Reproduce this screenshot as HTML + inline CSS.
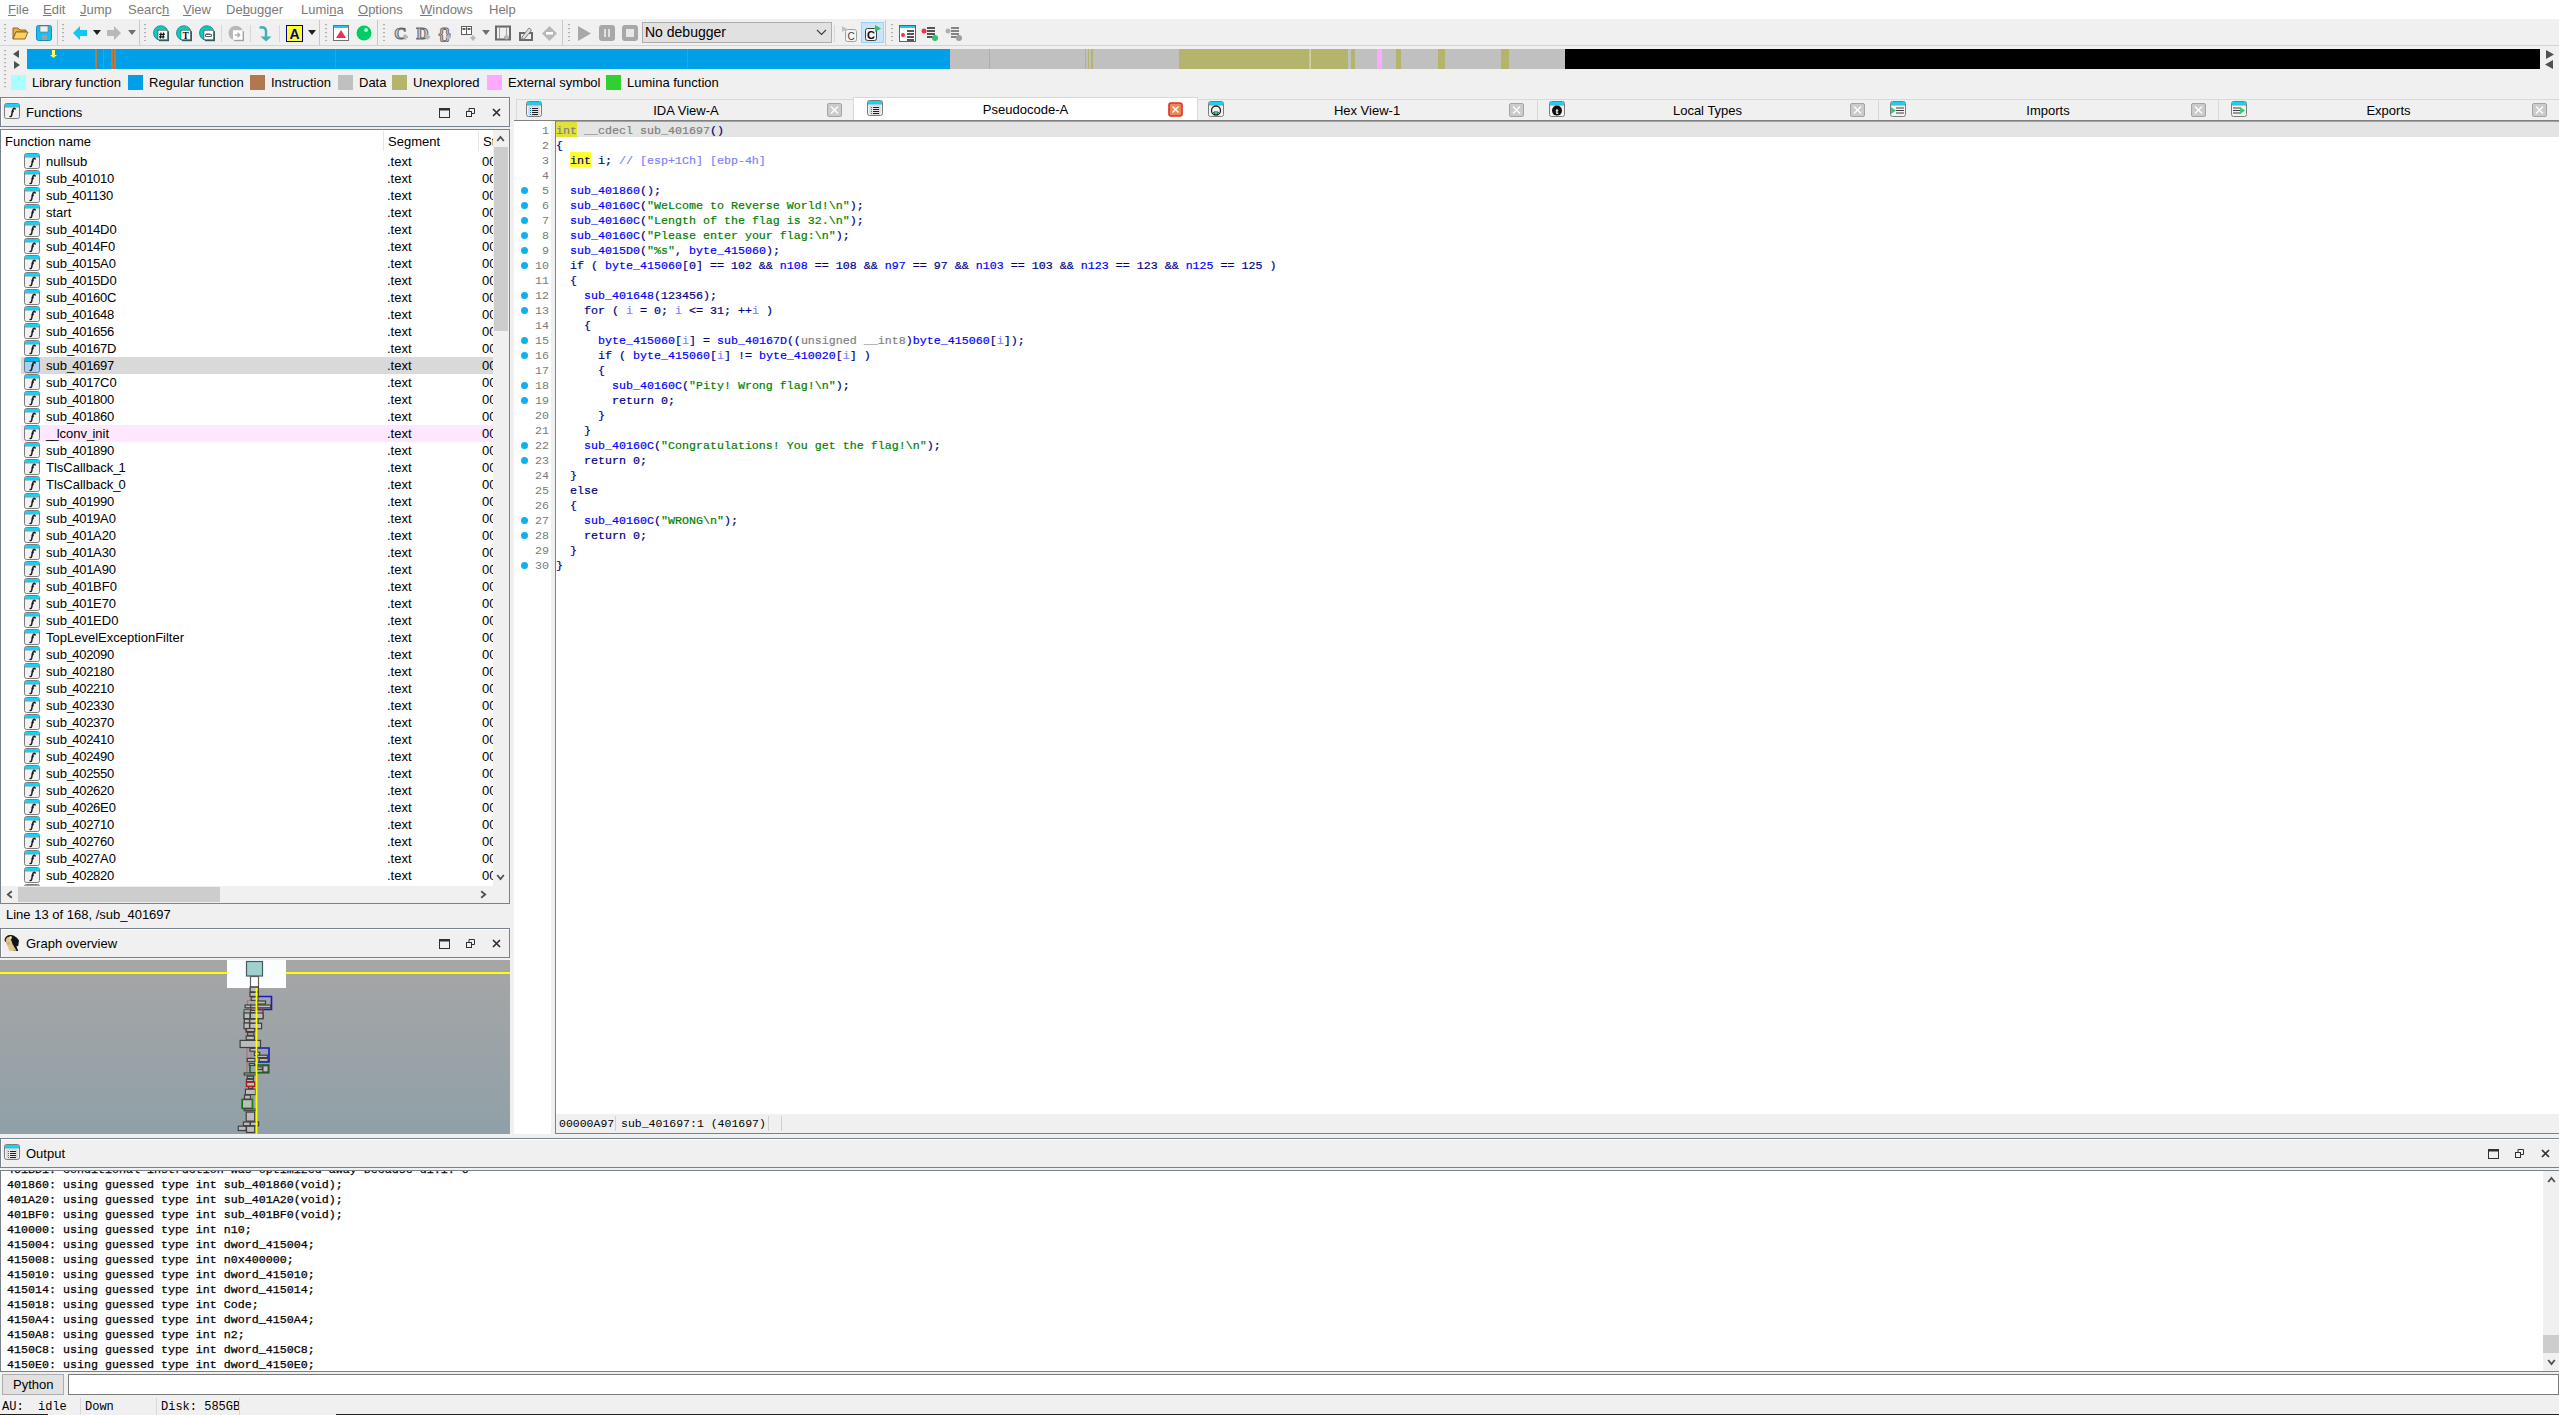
<!DOCTYPE html>
<html><head><meta charset="utf-8"><style>
*{margin:0;padding:0;box-sizing:border-box}
html,body{width:2559px;height:1415px;overflow:hidden;background:#f0f0f0;font-family:"Liberation Sans",sans-serif;font-size:13px;color:#000}
.a{position:absolute}
.t{position:absolute;white-space:pre;line-height:15px}
#menu{left:0;top:0;width:2559px;height:19px;background:#fff}
#menu span{position:absolute;top:2px;color:#7a7a7a;line-height:15px}
#menu u{text-decoration:underline;text-decoration-thickness:1px;text-underline-offset:1px}
.grip{position:absolute;width:2px;height:17px;background:repeating-linear-gradient(#b0b0b0 0 1px,#e0e0e0 1px 2px,transparent 2px 4px)}
.sep{position:absolute;width:1px;background:#c8c8c8}
.seg{position:absolute;top:0;height:20px}
.lg{position:absolute;top:75px;width:15px;height:15px}
.lt{position:absolute;top:75px;line-height:15px}
.dtitle{position:absolute;background:#f0f0f0;border:1px solid #7a828e;box-shadow:inset 1px 1px 0 #fff}
.panel{position:absolute;border:1px solid #7a828e}
.wicon{position:absolute;width:16px;height:16px;border:1px solid #7c7c7c;border-radius:2px;background:#f2f2f2;overflow:hidden}
.wicon:before{content:"";position:absolute;left:0;top:0;right:0;height:3px;background:#00dcff;border-bottom:1px solid #3a90a8}
.fi{position:absolute;font-family:"Liberation Serif",serif;font-style:italic;font-weight:bold;font-size:11px;left:4px;top:2px;line-height:11px;color:#222}
.row{position:absolute;left:21px;width:471px;height:17px}
.row .wicon{left:3px;top:0}
.row .nm{position:absolute;left:25px;top:1px;line-height:15px;white-space:pre}
.row .sg{position:absolute;left:366px;top:1px;line-height:15px}
.row .st{position:absolute;left:461px;top:1px;line-height:15px;width:10px;overflow:hidden;white-space:pre}
.code{position:absolute;left:556px;font-family:"Liberation Mono",monospace;font-size:11.667px;line-height:15px;height:15px;color:#000080;white-space:pre;-webkit-text-stroke-width:0.2px}
.ln{position:absolute;left:500px;width:49px;text-align:right;font-family:"Liberation Mono",monospace;font-size:11.667px;line-height:15px;color:#7a7a7a}
.dot{position:absolute;left:521px;width:7px;height:7px;border-radius:50%;background:#10b0f0}
.g{color:#808080}.b{color:#0000ff}.s{color:#008000}.c{color:#8080ff}.v{color:#8080ff}
.hy{background:#ffff30}.hy1{background:#e2e236}
.tab{position:absolute;height:21px;border:1px solid #d9d9d9;border-bottom:none;background:#f0f0f0}
.tab .tt{position:absolute;top:2px;left:0;width:100%;text-align:center;line-height:15px}
.xb{position:absolute;width:15px;height:14px;border:1px solid #b4b4b4;background:#e6e6e6}
.xb:before,.xb:after{content:"";position:absolute;left:1px;top:5px;width:11px;height:2px;background:#fff;transform:rotate(45deg)}
.xb:after{transform:rotate(-45deg)}
.out{position:absolute;left:7px;font-family:"Liberation Mono",monospace;font-size:11.667px;line-height:15px;color:#000;white-space:pre;-webkit-text-stroke:0.25px #000}
.ttl{position:absolute;line-height:15px;white-space:pre}
.st2{position:absolute;font-family:"Liberation Mono",monospace;font-size:12px;line-height:15px;white-space:pre}
</style></head><body>
<div id="menu" class="a">
<span style="left:8px"><u>F</u>ile</span>
<span style="left:43px"><u>E</u>dit</span>
<span style="left:80px"><u>J</u>ump</span>
<span style="left:128px">Searc<u>h</u></span>
<span style="left:183px"><u>V</u>iew</span>
<span style="left:226px">De<u>b</u>ugger</span>
<span style="left:301px">Lumi<u>n</u>a</span>
<span style="left:358px"><u>O</u>ptions</span>
<span style="left:420px"><u>W</u>indows</span>
<span style="left:489px">Help</span>
</div>
<div class="a" style="left:0;top:19px;width:2559px;height:27px;background:#f0f0f0;border-bottom:1px solid #d4d4d4"></div>
<div class="grip" style="left:4px;top:24px"></div>
<div class="grip" style="left:62px;top:24px"></div>
<div class="grip" style="left:144px;top:24px"></div>
<div class="grip" style="left:325px;top:24px"></div>
<div class="grip" style="left:383px;top:24px"></div>
<div class="grip" style="left:568px;top:24px"></div>
<div class="grip" style="left:891px;top:24px"></div>
<div class="sep" style="left:57px;top:20px;height:25px"></div>
<div class="sep" style="left:139px;top:20px;height:25px"></div>
<div class="sep" style="left:319px;top:20px;height:25px"></div>
<div class="sep" style="left:377px;top:20px;height:25px"></div>
<div class="sep" style="left:562px;top:20px;height:25px"></div>
<div class="sep" style="left:885px;top:20px;height:25px"></div>
<div class="sep" style="left:221px;top:25px;height:17px;background:#d8d8d8"></div>
<div class="sep" style="left:250px;top:25px;height:17px;background:#d8d8d8"></div>
<div class="sep" style="left:279px;top:25px;height:17px;background:#d8d8d8"></div>
<div class="sep" style="left:834px;top:25px;height:17px;background:#d8d8d8"></div>
<svg class="a" style="left:12px;top:26px" width="17" height="14" viewBox="0 0 17 14"><path d="M1 2h5l2 2h6v2H4L1 13z" fill="#e8b030" stroke="#8a6a20"/><path d="M4 6h12l-3 7H1z" fill="#ffd060" stroke="#8a6a20"/></svg>
<svg class="a" style="left:36px;top:25px" width="16" height="16" viewBox="0 0 16 16"><rect x="0.5" y="0.5" width="15" height="15" rx="2" fill="#18c0f0" stroke="#1090c0"/><rect x="4" y="1" width="8" height="6" fill="#f0f0f0" stroke="#707070" stroke-width=".6"/><rect x="6" y="10" width="5" height="5" fill="#a0a0a0"/></svg>
<svg class="a" style="left:73px;top:26px" width="14" height="14" viewBox="0 0 14 14"><path d="M0 7L7 0v4h7v6H7v4z" fill="#10c8f8"/></svg>
<svg class="a" style="left:93px;top:30px" width="8" height="5" viewBox="0 0 8 5"><path d="M0 0h8L4 5z" fill="#202020"/></svg>
<svg class="a" style="left:107px;top:26px" width="14" height="14" viewBox="0 0 14 14"><path d="M14 7L7 0v4H0v6h7v4z" fill="#b8b8b8"/></svg>
<svg class="a" style="left:128px;top:30px" width="8" height="5" viewBox="0 0 8 5"><path d="M0 0h8L4 5z" fill="#707070"/></svg>
<svg class="a" style="left:153px;top:25px" width="17" height="17" viewBox="0 0 17 17"><circle cx="7.8" cy="8" r="7.3" fill="#10c8c0" stroke="#0c8a88" stroke-width=".8"/><rect x="6" y="6.2" width="10" height="10" fill="#2a6060"/><rect x="5" y="5.2" width="9.6" height="9.6" fill="#fff" stroke="#303030" stroke-width=".5"/><path d="M8 7.5l-.6 6M10.6 7.5l-.6 6M6.3 9.3h5.5M6 11.8h5.5" stroke="#101010" stroke-width="1.2"/></svg>
<svg class="a" style="left:176px;top:25px" width="17" height="17" viewBox="0 0 17 17"><circle cx="7.8" cy="8" r="7.3" fill="#10c8c0" stroke="#0c8a88" stroke-width=".8"/><rect x="6" y="6.2" width="10" height="10" fill="#2a6060"/><rect x="5" y="5.2" width="9.6" height="9.6" fill="#fff" stroke="#303030" stroke-width=".5"/><text x="9.6" y="14" font-family="Liberation Serif" font-weight="bold" font-size="9.5" text-anchor="middle" fill="#101010">T</text></svg>
<svg class="a" style="left:199px;top:25px" width="17" height="17" viewBox="0 0 17 17"><circle cx="7.8" cy="8" r="7.3" fill="#10c8c0" stroke="#0c8a88" stroke-width=".8"/><rect x="6" y="6.2" width="10" height="10" fill="#2a6060"/><rect x="5" y="5.2" width="9.6" height="9.6" fill="#fff" stroke="#303030" stroke-width=".5"/><path d="M6.5 9.5h6v2h-6z" fill="none" stroke="#505050" stroke-width=".9"/><path d="M7 8l1 2 1-2 1 2 1-2" stroke="#606060" fill="none" stroke-width=".7"/></svg>
<svg class="a" style="left:228px;top:25px" width="17" height="17" viewBox="0 0 17 17"><circle cx="7.8" cy="8" r="7.3" fill="#b8b8b8"/><rect x="6" y="6.2" width="10" height="10" fill="#a0a0a0"/><rect x="5" y="5.2" width="9.6" height="9.6" fill="#fff"/><path d="M6.8 10h4.5M9.5 7.8l2.2 2.2-2.2 2.2" stroke="#b0b0b0" fill="none" stroke-width="1.4"/></svg>
<svg class="a" style="left:258px;top:25px" width="14" height="17" viewBox="0 0 14 17"><path d="M2.5 2.5q5-1 5.5 3.5v7" stroke="#40b0b0" stroke-width="2.4" fill="none" stroke-linecap="round"/><path d="M2.5 11.5l5.5 5 5.5-5z" fill="#40b0b0"/></svg>
<svg class="a" style="left:286px;top:25px" width="17" height="17" viewBox="0 0 17 17"><rect x="0.5" y="0.5" width="16" height="16" fill="#ffff30" stroke="#000080"/><text x="8.5" y="14" font-family="Liberation Sans" font-weight="bold" font-size="14" text-anchor="middle" fill="#000090">A</text></svg>
<svg class="a" style="left:308px;top:30px" width="8" height="5" viewBox="0 0 8 5"><path d="M0 0h8L4 5z" fill="#202020"/></svg>
<svg class="a" style="left:333px;top:25px" width="16" height="16" viewBox="0 0 16 16"><rect x="0.5" y="0.5" width="15" height="15" fill="#fff" stroke="#707070"/><rect x="1" y="1" width="14" height="2" fill="#20c8f0"/><path d="M3 13L8 5l5 8z" fill="#f03050"/></svg>
<svg class="a" style="left:356px;top:25px" width="16" height="16" viewBox="0 0 16 16"><circle cx="8" cy="8" r="7.5" fill="#00cc66"/><circle cx="10" cy="5" r="2" fill="#b0ffd0"/></svg>
<svg class="a" style="left:394px;top:25px" width="16" height="17" viewBox="0 0 16 17"><text x="6.5" y="14" font-family="Liberation Serif" font-weight="bold" font-size="17" text-anchor="middle" fill="#d8d8d8" stroke="#6a6a6a" stroke-width="1.1">C</text><path d="M11.5 9.5v5M9 12h5" stroke="#b8b8b8" stroke-width="2.2"/></svg>
<svg class="a" style="left:416px;top:25px" width="16" height="17" viewBox="0 0 16 17"><text x="6.5" y="14" font-family="Liberation Serif" font-weight="bold" font-size="17" text-anchor="middle" fill="#d8d8d8" stroke="#6a6a6a" stroke-width="1.1">D</text><path d="M11.5 9.5v5M9 12h5" stroke="#b8b8b8" stroke-width="2.2"/></svg>
<svg class="a" style="left:437px;top:25px" width="17" height="17" viewBox="0 0 17 17"><text x="7.5" y="13.5" font-family="Liberation Sans" font-weight="bold" font-size="15" text-anchor="middle" fill="#d8d8d8" stroke="#6a6a6a" stroke-width="1">{}</text><path d="M11.5 9.5v5M9 12h5" stroke="#b8b8b8" stroke-width="2.2"/></svg>
<svg class="a" style="left:495px;top:25px" width="17" height="17" viewBox="0 0 17 17"><rect x="1" y="1.5" width="14" height="13" fill="none" stroke="#6a6a6a" stroke-width="2"/><rect x="4.5" y="2.5" width="7" height="11" fill="#f0f0f0" stroke="#a0a0a0"/><path d="M11.5 9.5v5M9 12h5" stroke="#b8b8b8" stroke-width="2.2"/></svg>
<svg class="a" style="left:461px;top:25px" width="17" height="17" viewBox="0 0 17 17"><rect x="0.5" y="1.5" width="5" height="8" fill="#fff" stroke="#606060"/><rect x="5.5" y="1.5" width="5" height="8" fill="#fff" stroke="#606060"/><path d="M1.5 4h3M6.5 4h3" stroke="#606060" stroke-width="2"/><path d="M12 10.5v5M9.5 13h5" stroke="#b8b8b8" stroke-width="2.2"/></svg>
<svg class="a" style="left:482px;top:30px" width="8" height="5" viewBox="0 0 8 5"><path d="M0 0h8L4 5z" fill="#707070"/></svg>
<svg class="a" style="left:518px;top:26px" width="16" height="16" viewBox="0 0 16 16"><path d="M1 6h14v9H1z" fill="#6a6a6a"/><path d="M3 8h10v5H3z" fill="#f0f0f0"/><path d="M4 11l7-9 2.5 2-7 9H4z" fill="#e0e0e0" stroke="#808080"/></svg>
<svg class="a" style="left:542px;top:26px" width="15" height="15" viewBox="0 0 15 15"><path d="M7.5 0L15 7.5 7.5 15 0 7.5z" fill="#b8b8b8"/><rect x="4" y="6" width="7" height="2.6" fill="#fff"/></svg>
<svg class="a" style="left:577px;top:26px" width="15" height="15" viewBox="0 0 15 15"><path d="M1 0l13 7.5L1 15z" fill="#a8a8a8"/></svg>
<svg class="a" style="left:599px;top:25px" width="16" height="16" viewBox="0 0 16 16"><rect x="0" y="0" width="16" height="16" rx="3" fill="#a8a8a8"/><rect x="5" y="4" width="2" height="8" fill="#e0e0e0"/><rect x="9" y="4" width="2" height="8" fill="#e0e0e0"/></svg>
<svg class="a" style="left:622px;top:25px" width="16" height="16" viewBox="0 0 16 16"><rect x="0" y="0" width="16" height="16" rx="3" fill="#a8a8a8"/><rect x="4" y="4" width="8" height="8" fill="#e8e8e8"/></svg>
<div class="a" style="left:642px;top:22px;width:190px;height:21px;background:#e1e1e1;border:1px solid #adadad"></div>
<div class="t" style="left:645px;top:25px;font-size:14px">No debugger</div>
<svg class="a" style="left:816px;top:29px" width="11" height="7" viewBox="0 0 11 7"><path d="M1 1l4.5 4.5L10 1" stroke="#404040" fill="none" stroke-width="1.2"/></svg>
<svg class="a" style="left:841px;top:25px" width="17" height="17" viewBox="0 0 17 17"><path d="M1 1l5 3-5 3z" fill="#c0c0c0"/><rect x="4.5" y="4.5" width="11" height="12" rx="2" fill="#f4f4f4" stroke="#a0a0a0"/><text x="10" y="14.5" font-family="Liberation Sans" font-size="10" text-anchor="middle" fill="#404040">C</text></svg>
<div class="a" style="left:861px;top:22px;width:23px;height:21px;background:#cce4f7;border:1px solid #99d1ff"></div>
<svg class="a" style="left:864px;top:24px" width="18" height="18" viewBox="0 0 18 18"><rect x="1.5" y="4.5" width="11" height="12" rx="2" fill="#f4f4f4" stroke="#404040"/><text x="7" y="15" font-family="Liberation Sans" font-weight="bold" font-size="11" text-anchor="middle" fill="#101010">C</text><path d="M11 1l6 3.5-6 3.5z" fill="#30c070"/></svg>
<svg class="a" style="left:899px;top:25px" width="17" height="17" viewBox="0 0 17 17"><rect x="0.5" y="0.5" width="16" height="16" fill="#fff" stroke="#606060"/><rect x="1" y="1" width="15" height="2" fill="#20c8f0"/><circle cx="4" cy="10" r="2" fill="#f03050"/><path d="M8 6h7M8 9h7M8 12h7M8 15h7" stroke="#202020" stroke-width="1.3"/></svg>
<svg class="a" style="left:921px;top:25px" width="18" height="17" viewBox="0 0 18 17"><circle cx="3" cy="6" r="2.5" fill="#f03050"/><path d="M6 3h8M6 6h8M6 9h8M6 12h8" stroke="#202020" stroke-width="1.5"/><circle cx="14" cy="13" r="3" fill="#30c070"/></svg>
<svg class="a" style="left:945px;top:25px" width="18" height="17" viewBox="0 0 18 17"><circle cx="3" cy="6" r="2.5" fill="#b0b0b0"/><path d="M6 3h8M6 6h8M6 9h8M6 12h8" stroke="#606060" stroke-width="1.5"/><circle cx="14" cy="13" r="3" fill="#a0a0a0"/></svg>
<svg class="a" style="left:13px;top:50px" width="7" height="8" viewBox="0 0 7 8"><path d="M6 0v8L0 4z" fill="#505050"/></svg>
<svg class="a" style="left:14px;top:61px" width="7" height="8" viewBox="0 0 7 8"><path d="M0 0v8l6-4z" fill="#505050"/></svg>
<div class="grip" style="left:4px;top:50px;height:40px"></div>
<div class="a" style="left:27px;top:49px;width:2513px;height:20px;background:#c0c0c0">
<div class="seg" style="left:0px;width:923px;background:#00a0e8"></div>
<div class="seg" style="left:68px;width:2px;background:#c07840"></div>
<div class="seg" style="left:76px;width:1px;background:#c07840"></div>
<div class="seg" style="left:84px;width:2px;background:#c07840"></div>
<div class="seg" style="left:87px;width:2px;background:#c07840"></div>
<div class="seg" style="left:308px;width:1px;background:#c07840"></div>
<div class="seg" style="left:660px;width:1px;background:#c07840"></div>
<div class="seg" style="left:962px;width:1px;background:#b4b46c"></div>
<div class="seg" style="left:1058px;width:1px;background:#b4b46c"></div>
<div class="seg" style="left:1061px;width:1px;background:#b4b46c"></div>
<div class="seg" style="left:1064px;width:2px;background:#b4b46c"></div>
<div class="seg" style="left:1152px;width:130px;background:#b4b46c"></div>
<div class="seg" style="left:1283px;width:1px;background:#d0d0a0"></div>
<div class="seg" style="left:1284px;width:37px;background:#b4b46c"></div>
<div class="seg" style="left:1324px;width:4px;background:#b4b46c"></div>
<div class="seg" style="left:1350px;width:5px;background:#ffa8ff"></div>
<div class="seg" style="left:1369px;width:5px;background:#b4b46c"></div>
<div class="seg" style="left:1411px;width:7px;background:#b4b46c"></div>
<div class="seg" style="left:1474px;width:8px;background:#b4b46c"></div>
<div class="seg" style="left:1538px;width:975px;background:#000"></div>
</div>
<svg class="a" style="left:50px;top:50px" width="7" height="9" viewBox="0 0 7 9"><path d="M2 0h3v5h2L3.5 8 0 5h2z" fill="#ffff60"/></svg>
<svg class="a" style="left:2546px;top:50px" width="8" height="9" viewBox="0 0 8 9"><path d="M0 0v9l8-4.5z" fill="#505050"/></svg>
<svg class="a" style="left:2545px;top:60px" width="8" height="9" viewBox="0 0 8 9"><path d="M8 0v9L0 4.5z" fill="#505050"/></svg>
<div class="lg" style="left:11px;background:#a8ffff"></div><div class="lt" style="left:32px">Library function</div>
<div class="lg" style="left:128px;background:#00a0e8"></div><div class="lt" style="left:149px">Regular function</div>
<div class="lg" style="left:250px;background:#b07850"></div><div class="lt" style="left:271px">Instruction</div>
<div class="lg" style="left:338px;background:#c0c0c0"></div><div class="lt" style="left:359px">Data</div>
<div class="lg" style="left:392px;background:#b4b46c"></div><div class="lt" style="left:413px">Unexplored</div>
<div class="lg" style="left:487px;background:#ffa8ff"></div><div class="lt" style="left:508px">External symbol</div>
<div class="lg" style="left:606px;background:#30d030"></div><div class="lt" style="left:627px">Lumina function</div>
<div class="dtitle" style="left:0px;top:97px;width:510px;height:30px"></div>
<svg class="a" style="left:4px;top:103px" width="16" height="16" viewBox="0 0 16 16"><rect x="0.5" y="0.5" width="15" height="15" rx="2" fill="#f2f2f2" stroke="#7c7c7c"/><rect x="1" y="1" width="14" height="2.4" fill="#00dcff"/><path d="M1 3.9h14" stroke="#3a90a8"/><path d="M11.2 5.9q-.8-.9-1.7-.2-.6.5-.9 2l-1 4.8q-.3 1.2-1.5 1.1" stroke="#1a1a1a" stroke-width="1.5" fill="none" stroke-linecap="round"/><ellipse cx="8.7" cy="8.2" rx="1" ry="1.3" fill="#1a1a1a"/></svg>
<div class="ttl" style="left:26px;top:105px">Functions</div>
<svg class="a" style="left:439px;top:108px" width="11" height="10" viewBox="0 0 11 10"><rect x="0.5" y="0.5" width="10" height="9" fill="none" stroke="#303030"/><rect x="0" y="0" width="11" height="2.5" fill="#303030"/></svg>
<svg class="a" style="left:466px;top:108px" width="9" height="9" viewBox="0 0 9 9"><rect x="0.5" y="3.5" width="5" height="5" fill="none" stroke="#303030"/><path d="M3 3V0.5h5.5v5H6" fill="none" stroke="#303030"/></svg>
<svg class="a" style="left:492px;top:108px" width="9" height="9" viewBox="0 0 9 9"><path d="M1 1l7 7M8 1L1 8" stroke="#303030" stroke-width="1.7"/></svg>
<div class="panel" style="left:0;top:129px;width:510px;height:775px;background:#fff"></div>
<div class="ttl" style="left:5px;top:134px">Function name</div>
<div class="a" style="left:383px;top:131px;width:1px;height:20px;background:#e5e5e5"></div>
<div class="ttl" style="left:388px;top:134px">Segment</div>
<div class="a" style="left:478px;top:131px;width:1px;height:20px;background:#e5e5e5"></div>
<div class="ttl" style="left:483px;top:134px;width:10px;overflow:hidden">St</div>
<div class="a" style="left:1px;top:153px;width:492px;height:733px;overflow:hidden">
<div class="a" style="left:20px;top:0px;width:472px;height:17px;"></div>
<svg class="a" style="left:23px;top:0px" width="16" height="16" viewBox="0 0 16 16"><rect x="0.5" y="0.5" width="15" height="15" rx="2" fill="#f2f2f2" stroke="#7c7c7c"/><rect x="1" y="1" width="14" height="2.4" fill="#00dcff"/><path d="M1 3.9h14" stroke="#3a90a8"/><path d="M11.2 5.9q-.8-.9-1.7-.2-.6.5-.9 2l-1 4.8q-.3 1.2-1.5 1.1" stroke="#1a1a1a" stroke-width="1.5" fill="none" stroke-linecap="round"/><ellipse cx="8.7" cy="8.2" rx="1" ry="1.3" fill="#1a1a1a"/></svg>
<div class="ttl" style="left:45px;top:1px">nullsub</div>
<div class="ttl" style="left:386px;top:1px">.text</div>
<div class="ttl" style="left:481px;top:1px;width:11px;overflow:hidden">00</div>
<div class="a" style="left:20px;top:17px;width:472px;height:17px;"></div>
<svg class="a" style="left:23px;top:17px" width="16" height="16" viewBox="0 0 16 16"><rect x="0.5" y="0.5" width="15" height="15" rx="2" fill="#f2f2f2" stroke="#7c7c7c"/><rect x="1" y="1" width="14" height="2.4" fill="#00dcff"/><path d="M1 3.9h14" stroke="#3a90a8"/><path d="M11.2 5.9q-.8-.9-1.7-.2-.6.5-.9 2l-1 4.8q-.3 1.2-1.5 1.1" stroke="#1a1a1a" stroke-width="1.5" fill="none" stroke-linecap="round"/><ellipse cx="8.7" cy="8.2" rx="1" ry="1.3" fill="#1a1a1a"/></svg>
<div class="ttl" style="left:45px;top:18px">sub<span style="letter-spacing:-1.9px">_</span><span style="letter-spacing:-.3px">401010</span></div>
<div class="ttl" style="left:386px;top:18px">.text</div>
<div class="ttl" style="left:481px;top:18px;width:11px;overflow:hidden">00</div>
<div class="a" style="left:20px;top:34px;width:472px;height:17px;"></div>
<svg class="a" style="left:23px;top:34px" width="16" height="16" viewBox="0 0 16 16"><rect x="0.5" y="0.5" width="15" height="15" rx="2" fill="#f2f2f2" stroke="#7c7c7c"/><rect x="1" y="1" width="14" height="2.4" fill="#00dcff"/><path d="M1 3.9h14" stroke="#3a90a8"/><path d="M11.2 5.9q-.8-.9-1.7-.2-.6.5-.9 2l-1 4.8q-.3 1.2-1.5 1.1" stroke="#1a1a1a" stroke-width="1.5" fill="none" stroke-linecap="round"/><ellipse cx="8.7" cy="8.2" rx="1" ry="1.3" fill="#1a1a1a"/></svg>
<div class="ttl" style="left:45px;top:35px">sub<span style="letter-spacing:-1.9px">_</span><span style="letter-spacing:-.3px">401130</span></div>
<div class="ttl" style="left:386px;top:35px">.text</div>
<div class="ttl" style="left:481px;top:35px;width:11px;overflow:hidden">00</div>
<div class="a" style="left:20px;top:51px;width:472px;height:17px;"></div>
<svg class="a" style="left:23px;top:51px" width="16" height="16" viewBox="0 0 16 16"><rect x="0.5" y="0.5" width="15" height="15" rx="2" fill="#f2f2f2" stroke="#7c7c7c"/><rect x="1" y="1" width="14" height="2.4" fill="#00dcff"/><path d="M1 3.9h14" stroke="#3a90a8"/><path d="M11.2 5.9q-.8-.9-1.7-.2-.6.5-.9 2l-1 4.8q-.3 1.2-1.5 1.1" stroke="#1a1a1a" stroke-width="1.5" fill="none" stroke-linecap="round"/><ellipse cx="8.7" cy="8.2" rx="1" ry="1.3" fill="#1a1a1a"/></svg>
<div class="ttl" style="left:45px;top:52px">start</div>
<div class="ttl" style="left:386px;top:52px">.text</div>
<div class="ttl" style="left:481px;top:52px;width:11px;overflow:hidden">00</div>
<div class="a" style="left:20px;top:68px;width:472px;height:17px;"></div>
<svg class="a" style="left:23px;top:68px" width="16" height="16" viewBox="0 0 16 16"><rect x="0.5" y="0.5" width="15" height="15" rx="2" fill="#f2f2f2" stroke="#7c7c7c"/><rect x="1" y="1" width="14" height="2.4" fill="#00dcff"/><path d="M1 3.9h14" stroke="#3a90a8"/><path d="M11.2 5.9q-.8-.9-1.7-.2-.6.5-.9 2l-1 4.8q-.3 1.2-1.5 1.1" stroke="#1a1a1a" stroke-width="1.5" fill="none" stroke-linecap="round"/><ellipse cx="8.7" cy="8.2" rx="1" ry="1.3" fill="#1a1a1a"/></svg>
<div class="ttl" style="left:45px;top:69px">sub<span style="letter-spacing:-1.9px">_</span><span style="letter-spacing:-.3px">4014</span>D<span style="letter-spacing:-.3px">0</span></div>
<div class="ttl" style="left:386px;top:69px">.text</div>
<div class="ttl" style="left:481px;top:69px;width:11px;overflow:hidden">00</div>
<div class="a" style="left:20px;top:85px;width:472px;height:17px;"></div>
<svg class="a" style="left:23px;top:85px" width="16" height="16" viewBox="0 0 16 16"><rect x="0.5" y="0.5" width="15" height="15" rx="2" fill="#f2f2f2" stroke="#7c7c7c"/><rect x="1" y="1" width="14" height="2.4" fill="#00dcff"/><path d="M1 3.9h14" stroke="#3a90a8"/><path d="M11.2 5.9q-.8-.9-1.7-.2-.6.5-.9 2l-1 4.8q-.3 1.2-1.5 1.1" stroke="#1a1a1a" stroke-width="1.5" fill="none" stroke-linecap="round"/><ellipse cx="8.7" cy="8.2" rx="1" ry="1.3" fill="#1a1a1a"/></svg>
<div class="ttl" style="left:45px;top:86px">sub<span style="letter-spacing:-1.9px">_</span><span style="letter-spacing:-.3px">4014</span>F<span style="letter-spacing:-.3px">0</span></div>
<div class="ttl" style="left:386px;top:86px">.text</div>
<div class="ttl" style="left:481px;top:86px;width:11px;overflow:hidden">00</div>
<div class="a" style="left:20px;top:102px;width:472px;height:17px;"></div>
<svg class="a" style="left:23px;top:102px" width="16" height="16" viewBox="0 0 16 16"><rect x="0.5" y="0.5" width="15" height="15" rx="2" fill="#f2f2f2" stroke="#7c7c7c"/><rect x="1" y="1" width="14" height="2.4" fill="#00dcff"/><path d="M1 3.9h14" stroke="#3a90a8"/><path d="M11.2 5.9q-.8-.9-1.7-.2-.6.5-.9 2l-1 4.8q-.3 1.2-1.5 1.1" stroke="#1a1a1a" stroke-width="1.5" fill="none" stroke-linecap="round"/><ellipse cx="8.7" cy="8.2" rx="1" ry="1.3" fill="#1a1a1a"/></svg>
<div class="ttl" style="left:45px;top:103px">sub<span style="letter-spacing:-1.9px">_</span><span style="letter-spacing:-.3px">4015</span>A<span style="letter-spacing:-.3px">0</span></div>
<div class="ttl" style="left:386px;top:103px">.text</div>
<div class="ttl" style="left:481px;top:103px;width:11px;overflow:hidden">00</div>
<div class="a" style="left:20px;top:119px;width:472px;height:17px;"></div>
<svg class="a" style="left:23px;top:119px" width="16" height="16" viewBox="0 0 16 16"><rect x="0.5" y="0.5" width="15" height="15" rx="2" fill="#f2f2f2" stroke="#7c7c7c"/><rect x="1" y="1" width="14" height="2.4" fill="#00dcff"/><path d="M1 3.9h14" stroke="#3a90a8"/><path d="M11.2 5.9q-.8-.9-1.7-.2-.6.5-.9 2l-1 4.8q-.3 1.2-1.5 1.1" stroke="#1a1a1a" stroke-width="1.5" fill="none" stroke-linecap="round"/><ellipse cx="8.7" cy="8.2" rx="1" ry="1.3" fill="#1a1a1a"/></svg>
<div class="ttl" style="left:45px;top:120px">sub<span style="letter-spacing:-1.9px">_</span><span style="letter-spacing:-.3px">4015</span>D<span style="letter-spacing:-.3px">0</span></div>
<div class="ttl" style="left:386px;top:120px">.text</div>
<div class="ttl" style="left:481px;top:120px;width:11px;overflow:hidden">00</div>
<div class="a" style="left:20px;top:136px;width:472px;height:17px;"></div>
<svg class="a" style="left:23px;top:136px" width="16" height="16" viewBox="0 0 16 16"><rect x="0.5" y="0.5" width="15" height="15" rx="2" fill="#f2f2f2" stroke="#7c7c7c"/><rect x="1" y="1" width="14" height="2.4" fill="#00dcff"/><path d="M1 3.9h14" stroke="#3a90a8"/><path d="M11.2 5.9q-.8-.9-1.7-.2-.6.5-.9 2l-1 4.8q-.3 1.2-1.5 1.1" stroke="#1a1a1a" stroke-width="1.5" fill="none" stroke-linecap="round"/><ellipse cx="8.7" cy="8.2" rx="1" ry="1.3" fill="#1a1a1a"/></svg>
<div class="ttl" style="left:45px;top:137px">sub<span style="letter-spacing:-1.9px">_</span><span style="letter-spacing:-.3px">40160</span>C</div>
<div class="ttl" style="left:386px;top:137px">.text</div>
<div class="ttl" style="left:481px;top:137px;width:11px;overflow:hidden">00</div>
<div class="a" style="left:20px;top:153px;width:472px;height:17px;"></div>
<svg class="a" style="left:23px;top:153px" width="16" height="16" viewBox="0 0 16 16"><rect x="0.5" y="0.5" width="15" height="15" rx="2" fill="#f2f2f2" stroke="#7c7c7c"/><rect x="1" y="1" width="14" height="2.4" fill="#00dcff"/><path d="M1 3.9h14" stroke="#3a90a8"/><path d="M11.2 5.9q-.8-.9-1.7-.2-.6.5-.9 2l-1 4.8q-.3 1.2-1.5 1.1" stroke="#1a1a1a" stroke-width="1.5" fill="none" stroke-linecap="round"/><ellipse cx="8.7" cy="8.2" rx="1" ry="1.3" fill="#1a1a1a"/></svg>
<div class="ttl" style="left:45px;top:154px">sub<span style="letter-spacing:-1.9px">_</span><span style="letter-spacing:-.3px">401648</span></div>
<div class="ttl" style="left:386px;top:154px">.text</div>
<div class="ttl" style="left:481px;top:154px;width:11px;overflow:hidden">00</div>
<div class="a" style="left:20px;top:170px;width:472px;height:17px;"></div>
<svg class="a" style="left:23px;top:170px" width="16" height="16" viewBox="0 0 16 16"><rect x="0.5" y="0.5" width="15" height="15" rx="2" fill="#f2f2f2" stroke="#7c7c7c"/><rect x="1" y="1" width="14" height="2.4" fill="#00dcff"/><path d="M1 3.9h14" stroke="#3a90a8"/><path d="M11.2 5.9q-.8-.9-1.7-.2-.6.5-.9 2l-1 4.8q-.3 1.2-1.5 1.1" stroke="#1a1a1a" stroke-width="1.5" fill="none" stroke-linecap="round"/><ellipse cx="8.7" cy="8.2" rx="1" ry="1.3" fill="#1a1a1a"/></svg>
<div class="ttl" style="left:45px;top:171px">sub<span style="letter-spacing:-1.9px">_</span><span style="letter-spacing:-.3px">401656</span></div>
<div class="ttl" style="left:386px;top:171px">.text</div>
<div class="ttl" style="left:481px;top:171px;width:11px;overflow:hidden">00</div>
<div class="a" style="left:20px;top:187px;width:472px;height:17px;"></div>
<svg class="a" style="left:23px;top:187px" width="16" height="16" viewBox="0 0 16 16"><rect x="0.5" y="0.5" width="15" height="15" rx="2" fill="#f2f2f2" stroke="#7c7c7c"/><rect x="1" y="1" width="14" height="2.4" fill="#00dcff"/><path d="M1 3.9h14" stroke="#3a90a8"/><path d="M11.2 5.9q-.8-.9-1.7-.2-.6.5-.9 2l-1 4.8q-.3 1.2-1.5 1.1" stroke="#1a1a1a" stroke-width="1.5" fill="none" stroke-linecap="round"/><ellipse cx="8.7" cy="8.2" rx="1" ry="1.3" fill="#1a1a1a"/></svg>
<div class="ttl" style="left:45px;top:188px">sub<span style="letter-spacing:-1.9px">_</span><span style="letter-spacing:-.3px">40167</span>D</div>
<div class="ttl" style="left:386px;top:188px">.text</div>
<div class="ttl" style="left:481px;top:188px;width:11px;overflow:hidden">00</div>
<div class="a" style="left:20px;top:204px;width:472px;height:17px;background:#d9d9d9;"></div>
<svg class="a" style="left:23px;top:204px" width="16" height="16" viewBox="0 0 16 16"><rect x="0.5" y="0.5" width="15" height="15" rx="2" fill="#a8d0f0" stroke="#6a7c8c"/><rect x="1" y="1" width="14" height="3" fill="#00b8e8"/><path d="M1 4.5h14" stroke="#3a80a0"/><path d="M11.2 5.9q-.8-.9-1.7-.2-.6.5-.9 2l-1 4.8q-.3 1.2-1.5 1.1" stroke="#1a1a1a" stroke-width="1.5" fill="none" stroke-linecap="round"/><ellipse cx="8.7" cy="8.2" rx="1" ry="1.3" fill="#1a1a1a"/></svg>
<div class="ttl" style="left:45px;top:205px">sub<span style="letter-spacing:-1.9px">_</span><span style="letter-spacing:-.3px">401697</span></div>
<div class="ttl" style="left:386px;top:205px">.text</div>
<div class="ttl" style="left:481px;top:205px;width:11px;overflow:hidden">00</div>
<div class="a" style="left:20px;top:221px;width:472px;height:17px;"></div>
<svg class="a" style="left:23px;top:221px" width="16" height="16" viewBox="0 0 16 16"><rect x="0.5" y="0.5" width="15" height="15" rx="2" fill="#f2f2f2" stroke="#7c7c7c"/><rect x="1" y="1" width="14" height="2.4" fill="#00dcff"/><path d="M1 3.9h14" stroke="#3a90a8"/><path d="M11.2 5.9q-.8-.9-1.7-.2-.6.5-.9 2l-1 4.8q-.3 1.2-1.5 1.1" stroke="#1a1a1a" stroke-width="1.5" fill="none" stroke-linecap="round"/><ellipse cx="8.7" cy="8.2" rx="1" ry="1.3" fill="#1a1a1a"/></svg>
<div class="ttl" style="left:45px;top:222px">sub<span style="letter-spacing:-1.9px">_</span><span style="letter-spacing:-.3px">4017</span>C<span style="letter-spacing:-.3px">0</span></div>
<div class="ttl" style="left:386px;top:222px">.text</div>
<div class="ttl" style="left:481px;top:222px;width:11px;overflow:hidden">00</div>
<div class="a" style="left:20px;top:238px;width:472px;height:17px;"></div>
<svg class="a" style="left:23px;top:238px" width="16" height="16" viewBox="0 0 16 16"><rect x="0.5" y="0.5" width="15" height="15" rx="2" fill="#f2f2f2" stroke="#7c7c7c"/><rect x="1" y="1" width="14" height="2.4" fill="#00dcff"/><path d="M1 3.9h14" stroke="#3a90a8"/><path d="M11.2 5.9q-.8-.9-1.7-.2-.6.5-.9 2l-1 4.8q-.3 1.2-1.5 1.1" stroke="#1a1a1a" stroke-width="1.5" fill="none" stroke-linecap="round"/><ellipse cx="8.7" cy="8.2" rx="1" ry="1.3" fill="#1a1a1a"/></svg>
<div class="ttl" style="left:45px;top:239px">sub<span style="letter-spacing:-1.9px">_</span><span style="letter-spacing:-.3px">401800</span></div>
<div class="ttl" style="left:386px;top:239px">.text</div>
<div class="ttl" style="left:481px;top:239px;width:11px;overflow:hidden">00</div>
<div class="a" style="left:20px;top:255px;width:472px;height:17px;"></div>
<svg class="a" style="left:23px;top:255px" width="16" height="16" viewBox="0 0 16 16"><rect x="0.5" y="0.5" width="15" height="15" rx="2" fill="#f2f2f2" stroke="#7c7c7c"/><rect x="1" y="1" width="14" height="2.4" fill="#00dcff"/><path d="M1 3.9h14" stroke="#3a90a8"/><path d="M11.2 5.9q-.8-.9-1.7-.2-.6.5-.9 2l-1 4.8q-.3 1.2-1.5 1.1" stroke="#1a1a1a" stroke-width="1.5" fill="none" stroke-linecap="round"/><ellipse cx="8.7" cy="8.2" rx="1" ry="1.3" fill="#1a1a1a"/></svg>
<div class="ttl" style="left:45px;top:256px">sub<span style="letter-spacing:-1.9px">_</span><span style="letter-spacing:-.3px">401860</span></div>
<div class="ttl" style="left:386px;top:256px">.text</div>
<div class="ttl" style="left:481px;top:256px;width:11px;overflow:hidden">00</div>
<div class="a" style="left:20px;top:272px;width:472px;height:17px;background:#ffe8ff;"></div>
<svg class="a" style="left:23px;top:272px" width="16" height="16" viewBox="0 0 16 16"><rect x="0.5" y="0.5" width="15" height="15" rx="2" fill="#f2f2f2" stroke="#7c7c7c"/><rect x="1" y="1" width="14" height="2.4" fill="#00dcff"/><path d="M1 3.9h14" stroke="#3a90a8"/><path d="M11.2 5.9q-.8-.9-1.7-.2-.6.5-.9 2l-1 4.8q-.3 1.2-1.5 1.1" stroke="#1a1a1a" stroke-width="1.5" fill="none" stroke-linecap="round"/><ellipse cx="8.7" cy="8.2" rx="1" ry="1.3" fill="#1a1a1a"/></svg>
<div class="ttl" style="left:45px;top:273px"><span style="letter-spacing:-1.9px">_</span><span style="letter-spacing:-1.9px">_</span>lconv<span style="letter-spacing:-1.9px">_</span>init</div>
<div class="ttl" style="left:386px;top:273px">.text</div>
<div class="ttl" style="left:481px;top:273px;width:11px;overflow:hidden">00</div>
<div class="a" style="left:20px;top:289px;width:472px;height:17px;"></div>
<svg class="a" style="left:23px;top:289px" width="16" height="16" viewBox="0 0 16 16"><rect x="0.5" y="0.5" width="15" height="15" rx="2" fill="#f2f2f2" stroke="#7c7c7c"/><rect x="1" y="1" width="14" height="2.4" fill="#00dcff"/><path d="M1 3.9h14" stroke="#3a90a8"/><path d="M11.2 5.9q-.8-.9-1.7-.2-.6.5-.9 2l-1 4.8q-.3 1.2-1.5 1.1" stroke="#1a1a1a" stroke-width="1.5" fill="none" stroke-linecap="round"/><ellipse cx="8.7" cy="8.2" rx="1" ry="1.3" fill="#1a1a1a"/></svg>
<div class="ttl" style="left:45px;top:290px">sub<span style="letter-spacing:-1.9px">_</span><span style="letter-spacing:-.3px">401890</span></div>
<div class="ttl" style="left:386px;top:290px">.text</div>
<div class="ttl" style="left:481px;top:290px;width:11px;overflow:hidden">00</div>
<div class="a" style="left:20px;top:306px;width:472px;height:17px;"></div>
<svg class="a" style="left:23px;top:306px" width="16" height="16" viewBox="0 0 16 16"><rect x="0.5" y="0.5" width="15" height="15" rx="2" fill="#f2f2f2" stroke="#7c7c7c"/><rect x="1" y="1" width="14" height="2.4" fill="#00dcff"/><path d="M1 3.9h14" stroke="#3a90a8"/><path d="M11.2 5.9q-.8-.9-1.7-.2-.6.5-.9 2l-1 4.8q-.3 1.2-1.5 1.1" stroke="#1a1a1a" stroke-width="1.5" fill="none" stroke-linecap="round"/><ellipse cx="8.7" cy="8.2" rx="1" ry="1.3" fill="#1a1a1a"/></svg>
<div class="ttl" style="left:45px;top:307px">TlsCallback<span style="letter-spacing:-1.9px">_</span><span style="letter-spacing:-.3px">1</span></div>
<div class="ttl" style="left:386px;top:307px">.text</div>
<div class="ttl" style="left:481px;top:307px;width:11px;overflow:hidden">00</div>
<div class="a" style="left:20px;top:323px;width:472px;height:17px;"></div>
<svg class="a" style="left:23px;top:323px" width="16" height="16" viewBox="0 0 16 16"><rect x="0.5" y="0.5" width="15" height="15" rx="2" fill="#f2f2f2" stroke="#7c7c7c"/><rect x="1" y="1" width="14" height="2.4" fill="#00dcff"/><path d="M1 3.9h14" stroke="#3a90a8"/><path d="M11.2 5.9q-.8-.9-1.7-.2-.6.5-.9 2l-1 4.8q-.3 1.2-1.5 1.1" stroke="#1a1a1a" stroke-width="1.5" fill="none" stroke-linecap="round"/><ellipse cx="8.7" cy="8.2" rx="1" ry="1.3" fill="#1a1a1a"/></svg>
<div class="ttl" style="left:45px;top:324px">TlsCallback<span style="letter-spacing:-1.9px">_</span><span style="letter-spacing:-.3px">0</span></div>
<div class="ttl" style="left:386px;top:324px">.text</div>
<div class="ttl" style="left:481px;top:324px;width:11px;overflow:hidden">00</div>
<div class="a" style="left:20px;top:340px;width:472px;height:17px;"></div>
<svg class="a" style="left:23px;top:340px" width="16" height="16" viewBox="0 0 16 16"><rect x="0.5" y="0.5" width="15" height="15" rx="2" fill="#f2f2f2" stroke="#7c7c7c"/><rect x="1" y="1" width="14" height="2.4" fill="#00dcff"/><path d="M1 3.9h14" stroke="#3a90a8"/><path d="M11.2 5.9q-.8-.9-1.7-.2-.6.5-.9 2l-1 4.8q-.3 1.2-1.5 1.1" stroke="#1a1a1a" stroke-width="1.5" fill="none" stroke-linecap="round"/><ellipse cx="8.7" cy="8.2" rx="1" ry="1.3" fill="#1a1a1a"/></svg>
<div class="ttl" style="left:45px;top:341px">sub<span style="letter-spacing:-1.9px">_</span><span style="letter-spacing:-.3px">401990</span></div>
<div class="ttl" style="left:386px;top:341px">.text</div>
<div class="ttl" style="left:481px;top:341px;width:11px;overflow:hidden">00</div>
<div class="a" style="left:20px;top:357px;width:472px;height:17px;"></div>
<svg class="a" style="left:23px;top:357px" width="16" height="16" viewBox="0 0 16 16"><rect x="0.5" y="0.5" width="15" height="15" rx="2" fill="#f2f2f2" stroke="#7c7c7c"/><rect x="1" y="1" width="14" height="2.4" fill="#00dcff"/><path d="M1 3.9h14" stroke="#3a90a8"/><path d="M11.2 5.9q-.8-.9-1.7-.2-.6.5-.9 2l-1 4.8q-.3 1.2-1.5 1.1" stroke="#1a1a1a" stroke-width="1.5" fill="none" stroke-linecap="round"/><ellipse cx="8.7" cy="8.2" rx="1" ry="1.3" fill="#1a1a1a"/></svg>
<div class="ttl" style="left:45px;top:358px">sub<span style="letter-spacing:-1.9px">_</span><span style="letter-spacing:-.3px">4019</span>A<span style="letter-spacing:-.3px">0</span></div>
<div class="ttl" style="left:386px;top:358px">.text</div>
<div class="ttl" style="left:481px;top:358px;width:11px;overflow:hidden">00</div>
<div class="a" style="left:20px;top:374px;width:472px;height:17px;"></div>
<svg class="a" style="left:23px;top:374px" width="16" height="16" viewBox="0 0 16 16"><rect x="0.5" y="0.5" width="15" height="15" rx="2" fill="#f2f2f2" stroke="#7c7c7c"/><rect x="1" y="1" width="14" height="2.4" fill="#00dcff"/><path d="M1 3.9h14" stroke="#3a90a8"/><path d="M11.2 5.9q-.8-.9-1.7-.2-.6.5-.9 2l-1 4.8q-.3 1.2-1.5 1.1" stroke="#1a1a1a" stroke-width="1.5" fill="none" stroke-linecap="round"/><ellipse cx="8.7" cy="8.2" rx="1" ry="1.3" fill="#1a1a1a"/></svg>
<div class="ttl" style="left:45px;top:375px">sub<span style="letter-spacing:-1.9px">_</span><span style="letter-spacing:-.3px">401</span>A<span style="letter-spacing:-.3px">20</span></div>
<div class="ttl" style="left:386px;top:375px">.text</div>
<div class="ttl" style="left:481px;top:375px;width:11px;overflow:hidden">00</div>
<div class="a" style="left:20px;top:391px;width:472px;height:17px;"></div>
<svg class="a" style="left:23px;top:391px" width="16" height="16" viewBox="0 0 16 16"><rect x="0.5" y="0.5" width="15" height="15" rx="2" fill="#f2f2f2" stroke="#7c7c7c"/><rect x="1" y="1" width="14" height="2.4" fill="#00dcff"/><path d="M1 3.9h14" stroke="#3a90a8"/><path d="M11.2 5.9q-.8-.9-1.7-.2-.6.5-.9 2l-1 4.8q-.3 1.2-1.5 1.1" stroke="#1a1a1a" stroke-width="1.5" fill="none" stroke-linecap="round"/><ellipse cx="8.7" cy="8.2" rx="1" ry="1.3" fill="#1a1a1a"/></svg>
<div class="ttl" style="left:45px;top:392px">sub<span style="letter-spacing:-1.9px">_</span><span style="letter-spacing:-.3px">401</span>A<span style="letter-spacing:-.3px">30</span></div>
<div class="ttl" style="left:386px;top:392px">.text</div>
<div class="ttl" style="left:481px;top:392px;width:11px;overflow:hidden">00</div>
<div class="a" style="left:20px;top:408px;width:472px;height:17px;"></div>
<svg class="a" style="left:23px;top:408px" width="16" height="16" viewBox="0 0 16 16"><rect x="0.5" y="0.5" width="15" height="15" rx="2" fill="#f2f2f2" stroke="#7c7c7c"/><rect x="1" y="1" width="14" height="2.4" fill="#00dcff"/><path d="M1 3.9h14" stroke="#3a90a8"/><path d="M11.2 5.9q-.8-.9-1.7-.2-.6.5-.9 2l-1 4.8q-.3 1.2-1.5 1.1" stroke="#1a1a1a" stroke-width="1.5" fill="none" stroke-linecap="round"/><ellipse cx="8.7" cy="8.2" rx="1" ry="1.3" fill="#1a1a1a"/></svg>
<div class="ttl" style="left:45px;top:409px">sub<span style="letter-spacing:-1.9px">_</span><span style="letter-spacing:-.3px">401</span>A<span style="letter-spacing:-.3px">90</span></div>
<div class="ttl" style="left:386px;top:409px">.text</div>
<div class="ttl" style="left:481px;top:409px;width:11px;overflow:hidden">00</div>
<div class="a" style="left:20px;top:425px;width:472px;height:17px;"></div>
<svg class="a" style="left:23px;top:425px" width="16" height="16" viewBox="0 0 16 16"><rect x="0.5" y="0.5" width="15" height="15" rx="2" fill="#f2f2f2" stroke="#7c7c7c"/><rect x="1" y="1" width="14" height="2.4" fill="#00dcff"/><path d="M1 3.9h14" stroke="#3a90a8"/><path d="M11.2 5.9q-.8-.9-1.7-.2-.6.5-.9 2l-1 4.8q-.3 1.2-1.5 1.1" stroke="#1a1a1a" stroke-width="1.5" fill="none" stroke-linecap="round"/><ellipse cx="8.7" cy="8.2" rx="1" ry="1.3" fill="#1a1a1a"/></svg>
<div class="ttl" style="left:45px;top:426px">sub<span style="letter-spacing:-1.9px">_</span><span style="letter-spacing:-.3px">401</span>BF<span style="letter-spacing:-.3px">0</span></div>
<div class="ttl" style="left:386px;top:426px">.text</div>
<div class="ttl" style="left:481px;top:426px;width:11px;overflow:hidden">00</div>
<div class="a" style="left:20px;top:442px;width:472px;height:17px;"></div>
<svg class="a" style="left:23px;top:442px" width="16" height="16" viewBox="0 0 16 16"><rect x="0.5" y="0.5" width="15" height="15" rx="2" fill="#f2f2f2" stroke="#7c7c7c"/><rect x="1" y="1" width="14" height="2.4" fill="#00dcff"/><path d="M1 3.9h14" stroke="#3a90a8"/><path d="M11.2 5.9q-.8-.9-1.7-.2-.6.5-.9 2l-1 4.8q-.3 1.2-1.5 1.1" stroke="#1a1a1a" stroke-width="1.5" fill="none" stroke-linecap="round"/><ellipse cx="8.7" cy="8.2" rx="1" ry="1.3" fill="#1a1a1a"/></svg>
<div class="ttl" style="left:45px;top:443px">sub<span style="letter-spacing:-1.9px">_</span><span style="letter-spacing:-.3px">401</span>E<span style="letter-spacing:-.3px">70</span></div>
<div class="ttl" style="left:386px;top:443px">.text</div>
<div class="ttl" style="left:481px;top:443px;width:11px;overflow:hidden">00</div>
<div class="a" style="left:20px;top:459px;width:472px;height:17px;"></div>
<svg class="a" style="left:23px;top:459px" width="16" height="16" viewBox="0 0 16 16"><rect x="0.5" y="0.5" width="15" height="15" rx="2" fill="#f2f2f2" stroke="#7c7c7c"/><rect x="1" y="1" width="14" height="2.4" fill="#00dcff"/><path d="M1 3.9h14" stroke="#3a90a8"/><path d="M11.2 5.9q-.8-.9-1.7-.2-.6.5-.9 2l-1 4.8q-.3 1.2-1.5 1.1" stroke="#1a1a1a" stroke-width="1.5" fill="none" stroke-linecap="round"/><ellipse cx="8.7" cy="8.2" rx="1" ry="1.3" fill="#1a1a1a"/></svg>
<div class="ttl" style="left:45px;top:460px">sub<span style="letter-spacing:-1.9px">_</span><span style="letter-spacing:-.3px">401</span>ED<span style="letter-spacing:-.3px">0</span></div>
<div class="ttl" style="left:386px;top:460px">.text</div>
<div class="ttl" style="left:481px;top:460px;width:11px;overflow:hidden">00</div>
<div class="a" style="left:20px;top:476px;width:472px;height:17px;"></div>
<svg class="a" style="left:23px;top:476px" width="16" height="16" viewBox="0 0 16 16"><rect x="0.5" y="0.5" width="15" height="15" rx="2" fill="#f2f2f2" stroke="#7c7c7c"/><rect x="1" y="1" width="14" height="2.4" fill="#00dcff"/><path d="M1 3.9h14" stroke="#3a90a8"/><path d="M11.2 5.9q-.8-.9-1.7-.2-.6.5-.9 2l-1 4.8q-.3 1.2-1.5 1.1" stroke="#1a1a1a" stroke-width="1.5" fill="none" stroke-linecap="round"/><ellipse cx="8.7" cy="8.2" rx="1" ry="1.3" fill="#1a1a1a"/></svg>
<div class="ttl" style="left:45px;top:477px">TopLevelExceptionFilter</div>
<div class="ttl" style="left:386px;top:477px">.text</div>
<div class="ttl" style="left:481px;top:477px;width:11px;overflow:hidden">00</div>
<div class="a" style="left:20px;top:493px;width:472px;height:17px;"></div>
<svg class="a" style="left:23px;top:493px" width="16" height="16" viewBox="0 0 16 16"><rect x="0.5" y="0.5" width="15" height="15" rx="2" fill="#f2f2f2" stroke="#7c7c7c"/><rect x="1" y="1" width="14" height="2.4" fill="#00dcff"/><path d="M1 3.9h14" stroke="#3a90a8"/><path d="M11.2 5.9q-.8-.9-1.7-.2-.6.5-.9 2l-1 4.8q-.3 1.2-1.5 1.1" stroke="#1a1a1a" stroke-width="1.5" fill="none" stroke-linecap="round"/><ellipse cx="8.7" cy="8.2" rx="1" ry="1.3" fill="#1a1a1a"/></svg>
<div class="ttl" style="left:45px;top:494px">sub<span style="letter-spacing:-1.9px">_</span><span style="letter-spacing:-.3px">402090</span></div>
<div class="ttl" style="left:386px;top:494px">.text</div>
<div class="ttl" style="left:481px;top:494px;width:11px;overflow:hidden">00</div>
<div class="a" style="left:20px;top:510px;width:472px;height:17px;"></div>
<svg class="a" style="left:23px;top:510px" width="16" height="16" viewBox="0 0 16 16"><rect x="0.5" y="0.5" width="15" height="15" rx="2" fill="#f2f2f2" stroke="#7c7c7c"/><rect x="1" y="1" width="14" height="2.4" fill="#00dcff"/><path d="M1 3.9h14" stroke="#3a90a8"/><path d="M11.2 5.9q-.8-.9-1.7-.2-.6.5-.9 2l-1 4.8q-.3 1.2-1.5 1.1" stroke="#1a1a1a" stroke-width="1.5" fill="none" stroke-linecap="round"/><ellipse cx="8.7" cy="8.2" rx="1" ry="1.3" fill="#1a1a1a"/></svg>
<div class="ttl" style="left:45px;top:511px">sub<span style="letter-spacing:-1.9px">_</span><span style="letter-spacing:-.3px">402180</span></div>
<div class="ttl" style="left:386px;top:511px">.text</div>
<div class="ttl" style="left:481px;top:511px;width:11px;overflow:hidden">00</div>
<div class="a" style="left:20px;top:527px;width:472px;height:17px;"></div>
<svg class="a" style="left:23px;top:527px" width="16" height="16" viewBox="0 0 16 16"><rect x="0.5" y="0.5" width="15" height="15" rx="2" fill="#f2f2f2" stroke="#7c7c7c"/><rect x="1" y="1" width="14" height="2.4" fill="#00dcff"/><path d="M1 3.9h14" stroke="#3a90a8"/><path d="M11.2 5.9q-.8-.9-1.7-.2-.6.5-.9 2l-1 4.8q-.3 1.2-1.5 1.1" stroke="#1a1a1a" stroke-width="1.5" fill="none" stroke-linecap="round"/><ellipse cx="8.7" cy="8.2" rx="1" ry="1.3" fill="#1a1a1a"/></svg>
<div class="ttl" style="left:45px;top:528px">sub<span style="letter-spacing:-1.9px">_</span><span style="letter-spacing:-.3px">402210</span></div>
<div class="ttl" style="left:386px;top:528px">.text</div>
<div class="ttl" style="left:481px;top:528px;width:11px;overflow:hidden">00</div>
<div class="a" style="left:20px;top:544px;width:472px;height:17px;"></div>
<svg class="a" style="left:23px;top:544px" width="16" height="16" viewBox="0 0 16 16"><rect x="0.5" y="0.5" width="15" height="15" rx="2" fill="#f2f2f2" stroke="#7c7c7c"/><rect x="1" y="1" width="14" height="2.4" fill="#00dcff"/><path d="M1 3.9h14" stroke="#3a90a8"/><path d="M11.2 5.9q-.8-.9-1.7-.2-.6.5-.9 2l-1 4.8q-.3 1.2-1.5 1.1" stroke="#1a1a1a" stroke-width="1.5" fill="none" stroke-linecap="round"/><ellipse cx="8.7" cy="8.2" rx="1" ry="1.3" fill="#1a1a1a"/></svg>
<div class="ttl" style="left:45px;top:545px">sub<span style="letter-spacing:-1.9px">_</span><span style="letter-spacing:-.3px">402330</span></div>
<div class="ttl" style="left:386px;top:545px">.text</div>
<div class="ttl" style="left:481px;top:545px;width:11px;overflow:hidden">00</div>
<div class="a" style="left:20px;top:561px;width:472px;height:17px;"></div>
<svg class="a" style="left:23px;top:561px" width="16" height="16" viewBox="0 0 16 16"><rect x="0.5" y="0.5" width="15" height="15" rx="2" fill="#f2f2f2" stroke="#7c7c7c"/><rect x="1" y="1" width="14" height="2.4" fill="#00dcff"/><path d="M1 3.9h14" stroke="#3a90a8"/><path d="M11.2 5.9q-.8-.9-1.7-.2-.6.5-.9 2l-1 4.8q-.3 1.2-1.5 1.1" stroke="#1a1a1a" stroke-width="1.5" fill="none" stroke-linecap="round"/><ellipse cx="8.7" cy="8.2" rx="1" ry="1.3" fill="#1a1a1a"/></svg>
<div class="ttl" style="left:45px;top:562px">sub<span style="letter-spacing:-1.9px">_</span><span style="letter-spacing:-.3px">402370</span></div>
<div class="ttl" style="left:386px;top:562px">.text</div>
<div class="ttl" style="left:481px;top:562px;width:11px;overflow:hidden">00</div>
<div class="a" style="left:20px;top:578px;width:472px;height:17px;"></div>
<svg class="a" style="left:23px;top:578px" width="16" height="16" viewBox="0 0 16 16"><rect x="0.5" y="0.5" width="15" height="15" rx="2" fill="#f2f2f2" stroke="#7c7c7c"/><rect x="1" y="1" width="14" height="2.4" fill="#00dcff"/><path d="M1 3.9h14" stroke="#3a90a8"/><path d="M11.2 5.9q-.8-.9-1.7-.2-.6.5-.9 2l-1 4.8q-.3 1.2-1.5 1.1" stroke="#1a1a1a" stroke-width="1.5" fill="none" stroke-linecap="round"/><ellipse cx="8.7" cy="8.2" rx="1" ry="1.3" fill="#1a1a1a"/></svg>
<div class="ttl" style="left:45px;top:579px">sub<span style="letter-spacing:-1.9px">_</span><span style="letter-spacing:-.3px">402410</span></div>
<div class="ttl" style="left:386px;top:579px">.text</div>
<div class="ttl" style="left:481px;top:579px;width:11px;overflow:hidden">00</div>
<div class="a" style="left:20px;top:595px;width:472px;height:17px;"></div>
<svg class="a" style="left:23px;top:595px" width="16" height="16" viewBox="0 0 16 16"><rect x="0.5" y="0.5" width="15" height="15" rx="2" fill="#f2f2f2" stroke="#7c7c7c"/><rect x="1" y="1" width="14" height="2.4" fill="#00dcff"/><path d="M1 3.9h14" stroke="#3a90a8"/><path d="M11.2 5.9q-.8-.9-1.7-.2-.6.5-.9 2l-1 4.8q-.3 1.2-1.5 1.1" stroke="#1a1a1a" stroke-width="1.5" fill="none" stroke-linecap="round"/><ellipse cx="8.7" cy="8.2" rx="1" ry="1.3" fill="#1a1a1a"/></svg>
<div class="ttl" style="left:45px;top:596px">sub<span style="letter-spacing:-1.9px">_</span><span style="letter-spacing:-.3px">402490</span></div>
<div class="ttl" style="left:386px;top:596px">.text</div>
<div class="ttl" style="left:481px;top:596px;width:11px;overflow:hidden">00</div>
<div class="a" style="left:20px;top:612px;width:472px;height:17px;"></div>
<svg class="a" style="left:23px;top:612px" width="16" height="16" viewBox="0 0 16 16"><rect x="0.5" y="0.5" width="15" height="15" rx="2" fill="#f2f2f2" stroke="#7c7c7c"/><rect x="1" y="1" width="14" height="2.4" fill="#00dcff"/><path d="M1 3.9h14" stroke="#3a90a8"/><path d="M11.2 5.9q-.8-.9-1.7-.2-.6.5-.9 2l-1 4.8q-.3 1.2-1.5 1.1" stroke="#1a1a1a" stroke-width="1.5" fill="none" stroke-linecap="round"/><ellipse cx="8.7" cy="8.2" rx="1" ry="1.3" fill="#1a1a1a"/></svg>
<div class="ttl" style="left:45px;top:613px">sub<span style="letter-spacing:-1.9px">_</span><span style="letter-spacing:-.3px">402550</span></div>
<div class="ttl" style="left:386px;top:613px">.text</div>
<div class="ttl" style="left:481px;top:613px;width:11px;overflow:hidden">00</div>
<div class="a" style="left:20px;top:629px;width:472px;height:17px;"></div>
<svg class="a" style="left:23px;top:629px" width="16" height="16" viewBox="0 0 16 16"><rect x="0.5" y="0.5" width="15" height="15" rx="2" fill="#f2f2f2" stroke="#7c7c7c"/><rect x="1" y="1" width="14" height="2.4" fill="#00dcff"/><path d="M1 3.9h14" stroke="#3a90a8"/><path d="M11.2 5.9q-.8-.9-1.7-.2-.6.5-.9 2l-1 4.8q-.3 1.2-1.5 1.1" stroke="#1a1a1a" stroke-width="1.5" fill="none" stroke-linecap="round"/><ellipse cx="8.7" cy="8.2" rx="1" ry="1.3" fill="#1a1a1a"/></svg>
<div class="ttl" style="left:45px;top:630px">sub<span style="letter-spacing:-1.9px">_</span><span style="letter-spacing:-.3px">402620</span></div>
<div class="ttl" style="left:386px;top:630px">.text</div>
<div class="ttl" style="left:481px;top:630px;width:11px;overflow:hidden">00</div>
<div class="a" style="left:20px;top:646px;width:472px;height:17px;"></div>
<svg class="a" style="left:23px;top:646px" width="16" height="16" viewBox="0 0 16 16"><rect x="0.5" y="0.5" width="15" height="15" rx="2" fill="#f2f2f2" stroke="#7c7c7c"/><rect x="1" y="1" width="14" height="2.4" fill="#00dcff"/><path d="M1 3.9h14" stroke="#3a90a8"/><path d="M11.2 5.9q-.8-.9-1.7-.2-.6.5-.9 2l-1 4.8q-.3 1.2-1.5 1.1" stroke="#1a1a1a" stroke-width="1.5" fill="none" stroke-linecap="round"/><ellipse cx="8.7" cy="8.2" rx="1" ry="1.3" fill="#1a1a1a"/></svg>
<div class="ttl" style="left:45px;top:647px">sub<span style="letter-spacing:-1.9px">_</span><span style="letter-spacing:-.3px">4026</span>E<span style="letter-spacing:-.3px">0</span></div>
<div class="ttl" style="left:386px;top:647px">.text</div>
<div class="ttl" style="left:481px;top:647px;width:11px;overflow:hidden">00</div>
<div class="a" style="left:20px;top:663px;width:472px;height:17px;"></div>
<svg class="a" style="left:23px;top:663px" width="16" height="16" viewBox="0 0 16 16"><rect x="0.5" y="0.5" width="15" height="15" rx="2" fill="#f2f2f2" stroke="#7c7c7c"/><rect x="1" y="1" width="14" height="2.4" fill="#00dcff"/><path d="M1 3.9h14" stroke="#3a90a8"/><path d="M11.2 5.9q-.8-.9-1.7-.2-.6.5-.9 2l-1 4.8q-.3 1.2-1.5 1.1" stroke="#1a1a1a" stroke-width="1.5" fill="none" stroke-linecap="round"/><ellipse cx="8.7" cy="8.2" rx="1" ry="1.3" fill="#1a1a1a"/></svg>
<div class="ttl" style="left:45px;top:664px">sub<span style="letter-spacing:-1.9px">_</span><span style="letter-spacing:-.3px">402710</span></div>
<div class="ttl" style="left:386px;top:664px">.text</div>
<div class="ttl" style="left:481px;top:664px;width:11px;overflow:hidden">00</div>
<div class="a" style="left:20px;top:680px;width:472px;height:17px;"></div>
<svg class="a" style="left:23px;top:680px" width="16" height="16" viewBox="0 0 16 16"><rect x="0.5" y="0.5" width="15" height="15" rx="2" fill="#f2f2f2" stroke="#7c7c7c"/><rect x="1" y="1" width="14" height="2.4" fill="#00dcff"/><path d="M1 3.9h14" stroke="#3a90a8"/><path d="M11.2 5.9q-.8-.9-1.7-.2-.6.5-.9 2l-1 4.8q-.3 1.2-1.5 1.1" stroke="#1a1a1a" stroke-width="1.5" fill="none" stroke-linecap="round"/><ellipse cx="8.7" cy="8.2" rx="1" ry="1.3" fill="#1a1a1a"/></svg>
<div class="ttl" style="left:45px;top:681px">sub<span style="letter-spacing:-1.9px">_</span><span style="letter-spacing:-.3px">402760</span></div>
<div class="ttl" style="left:386px;top:681px">.text</div>
<div class="ttl" style="left:481px;top:681px;width:11px;overflow:hidden">00</div>
<div class="a" style="left:20px;top:697px;width:472px;height:17px;"></div>
<svg class="a" style="left:23px;top:697px" width="16" height="16" viewBox="0 0 16 16"><rect x="0.5" y="0.5" width="15" height="15" rx="2" fill="#f2f2f2" stroke="#7c7c7c"/><rect x="1" y="1" width="14" height="2.4" fill="#00dcff"/><path d="M1 3.9h14" stroke="#3a90a8"/><path d="M11.2 5.9q-.8-.9-1.7-.2-.6.5-.9 2l-1 4.8q-.3 1.2-1.5 1.1" stroke="#1a1a1a" stroke-width="1.5" fill="none" stroke-linecap="round"/><ellipse cx="8.7" cy="8.2" rx="1" ry="1.3" fill="#1a1a1a"/></svg>
<div class="ttl" style="left:45px;top:698px">sub<span style="letter-spacing:-1.9px">_</span><span style="letter-spacing:-.3px">4027</span>A<span style="letter-spacing:-.3px">0</span></div>
<div class="ttl" style="left:386px;top:698px">.text</div>
<div class="ttl" style="left:481px;top:698px;width:11px;overflow:hidden">00</div>
<div class="a" style="left:20px;top:714px;width:472px;height:17px;"></div>
<svg class="a" style="left:23px;top:714px" width="16" height="16" viewBox="0 0 16 16"><rect x="0.5" y="0.5" width="15" height="15" rx="2" fill="#f2f2f2" stroke="#7c7c7c"/><rect x="1" y="1" width="14" height="2.4" fill="#00dcff"/><path d="M1 3.9h14" stroke="#3a90a8"/><path d="M11.2 5.9q-.8-.9-1.7-.2-.6.5-.9 2l-1 4.8q-.3 1.2-1.5 1.1" stroke="#1a1a1a" stroke-width="1.5" fill="none" stroke-linecap="round"/><ellipse cx="8.7" cy="8.2" rx="1" ry="1.3" fill="#1a1a1a"/></svg>
<div class="ttl" style="left:45px;top:715px">sub<span style="letter-spacing:-1.9px">_</span><span style="letter-spacing:-.3px">402820</span></div>
<div class="ttl" style="left:386px;top:715px">.text</div>
<div class="ttl" style="left:481px;top:715px;width:11px;overflow:hidden">00</div>
<div class="a" style="left:20px;top:731px;width:472px;height:17px;"></div>
<svg class="a" style="left:23px;top:731px" width="16" height="16" viewBox="0 0 16 16"><rect x="0.5" y="0.5" width="15" height="15" rx="2" fill="#f2f2f2" stroke="#7c7c7c"/><rect x="1" y="1" width="14" height="2.4" fill="#00dcff"/><path d="M1 3.9h14" stroke="#3a90a8"/><path d="M11.2 5.9q-.8-.9-1.7-.2-.6.5-.9 2l-1 4.8q-.3 1.2-1.5 1.1" stroke="#1a1a1a" stroke-width="1.5" fill="none" stroke-linecap="round"/><ellipse cx="8.7" cy="8.2" rx="1" ry="1.3" fill="#1a1a1a"/></svg>
<div class="ttl" style="left:45px;top:732px">sub<span style="letter-spacing:-1.9px">_</span><span style="letter-spacing:-.3px">402880</span></div>
<div class="ttl" style="left:386px;top:732px">.text</div>
<div class="ttl" style="left:481px;top:732px;width:11px;overflow:hidden">00</div>
</div>
<div class="a" style="left:493px;top:130px;width:16px;height:756px;background:#f0f0f0"></div>
<div class="a" style="left:494px;top:147px;width:14px;height:184px;background:#cdcdcd"></div>
<svg class="a" style="left:496px;top:134px" width="9" height="9" viewBox="0 0 9 9"><path d="M1.2 7l3.3-4 3.3 4" stroke="#505050" fill="none" stroke-width="1.8"/></svg>
<svg class="a" style="left:496px;top:873px" width="9" height="9" viewBox="0 0 9 9"><path d="M1.2 2l3.3 4 3.3-4" stroke="#505050" fill="none" stroke-width="1.8"/></svg>
<div class="a" style="left:1px;top:886px;width:508px;height:17px;background:#f0f0f0"></div>
<div class="a" style="left:18px;top:887px;width:202px;height:15px;background:#cdcdcd"></div>
<svg class="a" style="left:5px;top:890px" width="9" height="9" viewBox="0 0 9 9"><path d="M6.8 1.2l-4 3.3 4 3.3" stroke="#505050" fill="none" stroke-width="1.8"/></svg>
<svg class="a" style="left:479px;top:890px" width="9" height="9" viewBox="0 0 9 9"><path d="M2.2 1.2l4 3.3-4 3.3" stroke="#505050" fill="none" stroke-width="1.8"/></svg>
<div class="ttl" style="left:6px;top:907px">Line 13 of 168, /sub_401697</div>
<div class="dtitle" style="left:0px;top:928px;width:510px;height:30px"></div>
<svg class="a" style="left:3px;top:934px" width="17" height="17" viewBox="0 0 17 17"><path d="M1.5 6.5q.5-5.5 6-5.5 5 0 8.5 5.5l-.8 5.5-1.8.3 2 5H11z" fill="#141414"/><path d="M2.8 5.5q1.5-3.5 4.5-2l2.2 6.5 4 6.8H6.2l-1-3.5q-2.5-3-2.4-7.8z" fill="#e0c48c"/><circle cx="5.5" cy="9.5" r="1.3" fill="#d08868" opacity=".6"/><circle cx="7.5" cy="3.5" r="1.5" fill="#f0dca8"/></svg>
<div class="ttl" style="left:26px;top:936px">Graph overview</div>
<svg class="a" style="left:439px;top:939px" width="11" height="10" viewBox="0 0 11 10"><rect x="0.5" y="0.5" width="10" height="9" fill="none" stroke="#303030"/><rect x="0" y="0" width="11" height="2.5" fill="#303030"/></svg>
<svg class="a" style="left:466px;top:939px" width="9" height="9" viewBox="0 0 9 9"><rect x="0.5" y="3.5" width="5" height="5" fill="none" stroke="#303030"/><path d="M3 3V0.5h5.5v5H6" fill="none" stroke="#303030"/></svg>
<svg class="a" style="left:492px;top:939px" width="9" height="9" viewBox="0 0 9 9"><path d="M1 1l7 7M8 1L1 8" stroke="#303030" stroke-width="1.7"/></svg>
<div class="a" style="left:0;top:960px;width:510px;height:174px;background:linear-gradient(#a6a6a6,#90a0a8);overflow:hidden">
<div class="a" style="left:227px;top:0;width:59px;height:28px;background:#fcfdfe"></div>
<div class="a" style="left:0;top:12px;width:227px;height:2px;background:#ffff00"></div>
<div class="a" style="left:286px;top:12px;width:224px;height:2px;background:#ffff00"></div>
<svg class="a" style="left:0;top:0" width="510" height="174"><rect x="246.5" y="1.5" width="16" height="14.5" fill="#a0d0d0" stroke="#406060" stroke-width="1.2"/><rect x="250.5" y="16.5" width="8" height="10.5" fill="#fff" stroke="#606060" stroke-width="1.2"/><path d="M257 36.5 L271.5 36.5 L271.5 49.5 L257 49.5" fill="none" stroke="#1818c8" stroke-width="1.6" opacity="1"/><path d="M256 40.5 L247.5 40.5 L247.5 49 L256 49" fill="none" stroke="#d06060" stroke-width="1.2" opacity="0.8"/><path d="M252 49.5 L244 49.5 L244 58.5 L256 58.5" fill="none" stroke="#107010" stroke-width="1.2" opacity="0.8"/><path d="M256 49.5 L263 49.5 L263 58.5 L256 58.5" fill="none" stroke="#b02020" stroke-width="1.4" opacity="1"/><path d="M252 67.5 L246 67.5 L246 72 L254 72" fill="none" stroke="#b02020" stroke-width="1.3" opacity="1"/><path d="M257 88 L269 88 L269 102 L258 102" fill="none" stroke="#1818c8" stroke-width="1.6" opacity="1"/><path d="M247 88 L247 112.5" fill="none" stroke="#c06060" stroke-width="1.2" opacity="0.8"/><path d="M251 88 L251 100" fill="none" stroke="#c07070" stroke-width="1.2" opacity="0.7"/><rect x="250" y="105" width="18.80000000000001" height="7.7999999999999545" fill="none" stroke="#107010" stroke-width="1.6"/><path d="M254 122 L254 126" fill="none" stroke="#b02020" stroke-width="1.5" opacity="1"/><rect x="242.2" y="139.4000000000001" width="10.200000000000017" height="9.0" fill="#bcbcbc" stroke="#107010" stroke-width="1.6"/><path d="M253 136 L253 149" fill="none" stroke="#50a050" stroke-width="1.0" opacity="0.7"/><rect x="250.2" y="27.100000000000023" width="8.199999999999989" height="4.7999999999999545" fill="#bcbcbc" stroke="#404040" stroke-width="1.2"/><rect x="250" y="32.39999999999998" width="8.399999999999977" height="4.0" fill="#bcbcbc" stroke="#404040" stroke-width="1.2"/><rect x="251.2" y="37" width="6.900000000000034" height="3.3999999999999773" fill="#bcbcbc" stroke="#404040" stroke-width="1.2"/><rect x="257.6" y="41" width="7.899999999999977" height="3" fill="#bcbcbc" stroke="#404040" stroke-width="1.2"/><rect x="245.1" y="45" width="5.700000000000017" height="2.7999999999999545" fill="#bcbcbc" stroke="#404040" stroke-width="1.2"/><rect x="250.8" y="45" width="6.699999999999989" height="2.7999999999999545" fill="#bcbcbc" stroke="#404040" stroke-width="1.2"/><rect x="257.5" y="45" width="13.100000000000023" height="2.7999999999999545" fill="#bcbcbc" stroke="#404040" stroke-width="1.2"/><rect x="250.4" y="50.39999999999998" width="4.299999999999983" height="2.2000000000000455" fill="#bcbcbc" stroke="#404040" stroke-width="1.2"/><rect x="244" y="53" width="6" height="5.600000000000023" fill="#bcbcbc" stroke="#404040" stroke-width="1.2"/><rect x="250.5" y="53" width="12.5" height="5.600000000000023" fill="#bcbcbc" stroke="#404040" stroke-width="1.2"/><rect x="244.3" y="59.200000000000045" width="5.199999999999989" height="4.0" fill="#bcbcbc" stroke="#404040" stroke-width="1.2"/><rect x="249.8" y="59.200000000000045" width="8.199999999999989" height="4.0" fill="#bcbcbc" stroke="#404040" stroke-width="1.2"/><rect x="244" y="63" width="5.5" height="5.7000000000000455" fill="#bcbcbc" stroke="#404040" stroke-width="1.2"/><rect x="249.8" y="63.299999999999955" width="11.800000000000011" height="5.400000000000091" fill="#bcbcbc" stroke="#404040" stroke-width="1.2"/><rect x="246.5" y="68.5" width="8.199999999999989" height="3.0" fill="#bcbcbc" stroke="#404040" stroke-width="1.2"/><rect x="247.5" y="72.70000000000005" width="6.400000000000006" height="2.599999999999909" fill="#bcbcbc" stroke="#404040" stroke-width="1.2"/><rect x="246.2" y="76.09999999999991" width="8.200000000000017" height="3.7000000000000455" fill="#bcbcbc" stroke="#404040" stroke-width="1.2"/><rect x="240.1" y="80.40000000000009" width="20.400000000000006" height="7.099999999999909" fill="#bcbcbc" stroke="#404040" stroke-width="1.2"/><rect x="250" y="88.29999999999995" width="7.300000000000011" height="2.900000000000091" fill="#bcbcbc" stroke="#404040" stroke-width="1.2"/><rect x="254.4" y="92.29999999999995" width="5.299999999999983" height="3.2000000000000455" fill="#bcbcbc" stroke="#404040" stroke-width="1.2"/><rect x="257.3" y="95.20000000000005" width="10.099999999999966" height="2.3999999999998636" fill="#bcbcbc" stroke="#404040" stroke-width="1.2"/><rect x="247.3" y="98.40000000000009" width="7.699999999999989" height="3.099999999999909" fill="#bcbcbc" stroke="#404040" stroke-width="1.2"/><rect x="259.2" y="98.40000000000009" width="8.800000000000011" height="3.099999999999909" fill="#bcbcbc" stroke="#404040" stroke-width="1.2"/><rect x="249.3" y="103.5" width="5.099999999999994" height="2.0" fill="#bcbcbc" stroke="#404040" stroke-width="1.2"/><rect x="257" y="106.90000000000009" width="5.300000000000011" height="2.5" fill="#bcbcbc" stroke="#404040" stroke-width="1.2"/><rect x="262.9" y="105.70000000000005" width="5.300000000000011" height="6.2999999999999545" fill="#bcbcbc" stroke="#404040" stroke-width="1.2"/><rect x="244.2" y="113" width="11.600000000000023" height="2" fill="#bcbcbc" stroke="#404040" stroke-width="1.2"/><rect x="247.3" y="116.20000000000005" width="6.199999999999989" height="2.2999999999999545" fill="#bcbcbc" stroke="#404040" stroke-width="1.2"/><rect x="246.5" y="119.29999999999995" width="6.800000000000011" height="2.2999999999999545" fill="#bcbcbc" stroke="#404040" stroke-width="1.2"/><rect x="246.5" y="122.09999999999991" width="8.199999999999989" height="4.300000000000182" fill="#bcbcbc" stroke="#404040" stroke-width="1.2"/><rect x="248.5" y="126.70000000000005" width="4.199999999999989" height="1.8999999999998636" fill="#bcbcbc" stroke="#404040" stroke-width="1.2"/><rect x="245.4" y="129.20000000000005" width="10.099999999999994" height="5.399999999999864" fill="#bcbcbc" stroke="#404040" stroke-width="1.2"/><rect x="244.5" y="135.0999999999999" width="5.900000000000006" height="4.0" fill="#bcbcbc" stroke="#404040" stroke-width="1.2"/><rect x="244.2" y="149" width="11.600000000000023" height="1.7000000000000455" fill="#bcbcbc" stroke="#404040" stroke-width="1.2"/><rect x="246.2" y="152.0999999999999" width="8.5" height="9.0" fill="#bcbcbc" stroke="#404040" stroke-width="1.2"/><rect x="243.4" y="162" width="6.799999999999983" height="3.7000000000000455" fill="#bcbcbc" stroke="#404040" stroke-width="1.2"/><rect x="250.4" y="162" width="8.200000000000017" height="3.7000000000000455" fill="#bcbcbc" stroke="#404040" stroke-width="1.2"/><rect x="238.3" y="166.20000000000005" width="7.899999999999977" height="4.2999999999999545" fill="#bcbcbc" stroke="#404040" stroke-width="1.2"/><rect x="246.5" y="166.20000000000005" width="8.199999999999989" height="6.2000000000000455" fill="#bcbcbc" stroke="#404040" stroke-width="1.2"/><rect x="246.5" y="122.09999999999991" width="8.199999999999989" height="4.300000000000182" fill="none" stroke="#b02020" stroke-width="1.3"/><rect x="255.6" y="28" width="1.8" height="146" fill="#ffff00"/></svg>
</div>
<div class="a" style="left:514px;top:120px;width:2045px;height:1px;background:#808080"></div>
<div class="a" style="left:516px;top:99px;width:340px;height:21px;background:#f0f0f0;border-top:1px solid #d9d9d9;border-left:1px solid #d9d9d9"></div>
<svg class="a" style="left:526px;top:101px" width="16" height="16" viewBox="0 0 16 16"><rect x="0.5" y="0.5" width="15" height="15" rx="2" fill="#f2f2f2" stroke="#7c7c7c"/><rect x="1" y="1" width="14" height="2.4" fill="#00dcff"/><path d="M1 3.9h14" stroke="#3a90a8"/><rect x="2.5" y="5" width="11" height="9.5" rx="1.5" fill="#c8c8c8"/><rect x="3.5" y="5.5" width="9" height="8.5" fill="#e8e8e8"/><path d="M6 7.5h6M6 9.5h6M6 11.5h6M6 13.5h6" stroke="#202020" stroke-width="1.1"/><path d="M4 7.5h1M4 9.5h1M4 11.5h1M4 13.5h1" stroke="#1080c0" stroke-width="1.1"/></svg>
<div class="ttl" style="left:516px;top:103px;width:340px;text-align:center">IDA View-A</div>
<svg class="a" style="left:827px;top:103px" width="15" height="14" viewBox="0 0 15 14"><rect x="0.5" y="0.5" width="14" height="13" rx="1.5" fill="#cbcbcb" stroke="#a4a4a4"/><path d="M4 3.5l7 7M11 3.5l-7 7" stroke="#fff" stroke-width="1.3"/></svg>
<div class="a" style="left:853px;top:97px;width:345px;height:23px;background:#fff;border:1px solid #d9d9d9;border-bottom:none"></div>
<svg class="a" style="left:867px;top:100px" width="16" height="16" viewBox="0 0 16 16"><rect x="0.5" y="0.5" width="15" height="15" rx="2" fill="#f2f2f2" stroke="#7c7c7c"/><rect x="1" y="1" width="14" height="2.4" fill="#00dcff"/><path d="M1 3.9h14" stroke="#3a90a8"/><rect x="2.5" y="5" width="11" height="9.5" rx="1.5" fill="#c8c8c8"/><rect x="3.5" y="5.5" width="9" height="8.5" fill="#e8e8e8"/><path d="M6 7.5h6M6 9.5h6M6 11.5h6M6 13.5h6" stroke="#202020" stroke-width="1.1"/><path d="M4 7.5h1M4 9.5h1M4 11.5h1M4 13.5h1" stroke="#1080c0" stroke-width="1.1"/></svg>
<div class="ttl" style="left:853px;top:102px;width:345px;text-align:center">Pseudocode-A</div>
<svg class="a" style="left:1168px;top:102px" width="15" height="15" viewBox="0 0 15 15"><rect x="1" y="1" width="13" height="13" rx="2" fill="#e88a5a" stroke="#e03020" stroke-width="1.6"/><path d="M4.5 4.5l6 6M10.5 4.5l-6 6" stroke="#fff" stroke-width="1.3"/></svg>
<div class="a" style="left:1197px;top:99px;width:340px;height:21px;background:#f0f0f0;border-top:1px solid #d9d9d9;border-left:1px solid #d9d9d9"></div>
<svg class="a" style="left:1208px;top:101px" width="16" height="16" viewBox="0 0 16 16"><rect x="0.5" y="0.5" width="15" height="15" rx="2" fill="#f2f2f2" stroke="#7c7c7c"/><rect x="1" y="1" width="14" height="2.4" fill="#00dcff"/><path d="M1 3.9h14" stroke="#3a90a8"/><circle cx="8" cy="9.5" r="4.5" fill="none" stroke="#202020" stroke-width="1.3"/><path d="M5 11.5q3-3 6 0q-3 3-6 0z" fill="#101010"/><circle cx="8" cy="11.5" r="1.5" fill="#30e090"/></svg>
<div class="ttl" style="left:1197px;top:103px;width:340px;text-align:center">Hex View-1</div>
<svg class="a" style="left:1509px;top:103px" width="15" height="14" viewBox="0 0 15 14"><rect x="0.5" y="0.5" width="14" height="13" rx="1.5" fill="#cbcbcb" stroke="#a4a4a4"/><path d="M4 3.5l7 7M11 3.5l-7 7" stroke="#fff" stroke-width="1.3"/></svg>
<div class="a" style="left:1537px;top:99px;width:341px;height:21px;background:#f0f0f0;border-top:1px solid #d9d9d9;border-left:1px solid #d9d9d9"></div>
<svg class="a" style="left:1549px;top:101px" width="16" height="16" viewBox="0 0 16 16"><rect x="0.5" y="0.5" width="15" height="15" rx="2" fill="#f2f2f2" stroke="#7c7c7c"/><rect x="1" y="1" width="14" height="2.4" fill="#00dcff"/><path d="M1 3.9h14" stroke="#3a90a8"/><circle cx="8" cy="9.6" r="5" fill="#101010"/><text x="8" y="13" font-family="Liberation Serif" font-weight="bold" font-size="9" text-anchor="middle" fill="#fff">t</text></svg>
<div class="ttl" style="left:1537px;top:103px;width:341px;text-align:center">Local Types</div>
<svg class="a" style="left:1850px;top:103px" width="15" height="14" viewBox="0 0 15 14"><rect x="0.5" y="0.5" width="14" height="13" rx="1.5" fill="#cbcbcb" stroke="#a4a4a4"/><path d="M4 3.5l7 7M11 3.5l-7 7" stroke="#fff" stroke-width="1.3"/></svg>
<div class="a" style="left:1878px;top:99px;width:340px;height:21px;background:#f0f0f0;border-top:1px solid #d9d9d9;border-left:1px solid #d9d9d9"></div>
<svg class="a" style="left:1890px;top:101px" width="16" height="16" viewBox="0 0 16 16"><rect x="0.5" y="0.5" width="15" height="15" rx="2" fill="#f2f2f2" stroke="#7c7c7c"/><rect x="1" y="1" width="14" height="2.4" fill="#00dcff"/><path d="M1 3.9h14" stroke="#3a90a8"/><path d="M6 7h8M6 9.5h8M6 12h8" stroke="#404040"/><path d="M1 6l5 3.5-5 3.5z" fill="#30d070"/></svg>
<div class="ttl" style="left:1878px;top:103px;width:340px;text-align:center">Imports</div>
<svg class="a" style="left:2191px;top:103px" width="15" height="14" viewBox="0 0 15 14"><rect x="0.5" y="0.5" width="14" height="13" rx="1.5" fill="#cbcbcb" stroke="#a4a4a4"/><path d="M4 3.5l7 7M11 3.5l-7 7" stroke="#fff" stroke-width="1.3"/></svg>
<div class="a" style="left:2218px;top:99px;width:341px;height:21px;background:#f0f0f0;border-top:1px solid #d9d9d9;border-left:1px solid #d9d9d9"></div>
<svg class="a" style="left:2231px;top:101px" width="16" height="16" viewBox="0 0 16 16"><rect x="0.5" y="0.5" width="15" height="15" rx="2" fill="#f2f2f2" stroke="#7c7c7c"/><rect x="1" y="1" width="14" height="2.4" fill="#00dcff"/><path d="M1 3.9h14" stroke="#3a90a8"/><path d="M2 7h8M2 9.5h8M2 12h8" stroke="#404040"/><path d="M9 6l5 3.5-5 3.5z" fill="#30d070"/></svg>
<div class="ttl" style="left:2218px;top:103px;width:341px;text-align:center">Exports</div>
<svg class="a" style="left:2532px;top:103px" width="15" height="14" viewBox="0 0 15 14"><rect x="0.5" y="0.5" width="14" height="13" rx="1.5" fill="#cbcbcb" stroke="#a4a4a4"/><path d="M4 3.5l7 7M11 3.5l-7 7" stroke="#fff" stroke-width="1.3"/></svg>
<div class="a" style="left:514px;top:121px;width:37px;height:1013px;background:#fff"></div>
<div class="a" style="left:551px;top:121px;width:4px;height:1013px;background:#f0f0f0"></div>
<div class="a" style="left:555px;top:120px;width:1px;height:1014px;background:#808080"></div>
<div class="a" style="left:556px;top:121px;width:2003px;height:993px;background:#fff"></div>
<div class="a" style="left:556px;top:121px;width:2003px;height:1px;background:#a0a0a0"></div>
<div class="a" style="left:556px;top:122px;width:2003px;height:15px;background:#e4e4e4"></div>
<div class="a" style="left:556px;top:122px;width:21px;height:15px;background:#e2e236"></div>
<div class="a" style="left:570px;top:152px;width:21px;height:15px;background:#ffff30"></div>
<div class="a" style="left:556px;top:1114px;width:2003px;height:20px;background:#f0f0f0;border-bottom:1px solid #808080"></div>
<div class="a mono" style="left:559px;top:1116px;font-family:'Liberation Mono',monospace;font-size:11.5px;line-height:15px;white-space:pre">00000A97</div>
<div class="a" style="left:615px;top:1116px;width:1px;height:15px;background:#d0d0d0"></div>
<div class="a mono" style="left:621px;top:1116px;font-family:'Liberation Mono',monospace;font-size:11.5px;line-height:15px;white-space:pre">sub_401697:1 (401697)</div>
<div class="a" style="left:768px;top:1116px;width:1px;height:15px;background:#d0d0d0"></div>
<div class="a" style="left:781px;top:1116px;width:1px;height:15px;background:#d0d0d0"></div>
<div class="ln" style="top:124px">1</div>
<div class="code" style="top:124px"><span class="g">int</span><span class="g"> __cdecl sub_401697</span>()</div>
<div class="ln" style="top:139px">2</div>
<div class="code" style="top:139px">{</div>
<div class="ln" style="top:154px">3</div>
<div class="code" style="top:154px">  int i; <span class="c">// [esp+1Ch] [ebp-4h]</span></div>
<div class="ln" style="top:169px">4</div>
<div class="code" style="top:169px"></div>
<div class="ln" style="top:184px">5</div>
<div class="dot" style="top:187px"></div>
<div class="code" style="top:184px">  <span class="b">sub_401860</span>();</div>
<div class="ln" style="top:199px">6</div>
<div class="dot" style="top:202px"></div>
<div class="code" style="top:199px">  <span class="b">sub_40160C</span>(<span class="s">"WeLcome to Reverse World!\n"</span>);</div>
<div class="ln" style="top:214px">7</div>
<div class="dot" style="top:217px"></div>
<div class="code" style="top:214px">  <span class="b">sub_40160C</span>(<span class="s">"Length of the flag is 32.\n"</span>);</div>
<div class="ln" style="top:229px">8</div>
<div class="dot" style="top:232px"></div>
<div class="code" style="top:229px">  <span class="b">sub_40160C</span>(<span class="s">"Please enter your flag:\n"</span>);</div>
<div class="ln" style="top:244px">9</div>
<div class="dot" style="top:247px"></div>
<div class="code" style="top:244px">  <span class="b">sub_4015D0</span>(<span class="s">"%s"</span>, <span class="b">byte_415060</span>);</div>
<div class="ln" style="top:259px">10</div>
<div class="dot" style="top:262px"></div>
<div class="code" style="top:259px">  if ( <span class="b">byte_415060</span>[0] == 102 &amp;&amp; <span class="b">n108</span> == 108 &amp;&amp; <span class="b">n97</span> == 97 &amp;&amp; <span class="b">n103</span> == 103 &amp;&amp; <span class="b">n123</span> == 123 &amp;&amp; <span class="b">n125</span> == 125 )</div>
<div class="ln" style="top:274px">11</div>
<div class="code" style="top:274px">  {</div>
<div class="ln" style="top:289px">12</div>
<div class="dot" style="top:292px"></div>
<div class="code" style="top:289px">    <span class="b">sub_401648</span>(123456);</div>
<div class="ln" style="top:304px">13</div>
<div class="dot" style="top:307px"></div>
<div class="code" style="top:304px">    for ( <span class="v">i</span> = 0; <span class="v">i</span> &lt;= 31; ++<span class="v">i</span> )</div>
<div class="ln" style="top:319px">14</div>
<div class="code" style="top:319px">    {</div>
<div class="ln" style="top:334px">15</div>
<div class="dot" style="top:337px"></div>
<div class="code" style="top:334px">      <span class="b">byte_415060</span>[<span class="v">i</span>] = <span class="b">sub_40167D</span>((<span class="g">unsigned __int8</span>)<span class="b">byte_415060</span>[<span class="v">i</span>]);</div>
<div class="ln" style="top:349px">16</div>
<div class="dot" style="top:352px"></div>
<div class="code" style="top:349px">      if ( <span class="b">byte_415060</span>[<span class="v">i</span>] != <span class="b">byte_410020</span>[<span class="v">i</span>] )</div>
<div class="ln" style="top:364px">17</div>
<div class="code" style="top:364px">      {</div>
<div class="ln" style="top:379px">18</div>
<div class="dot" style="top:382px"></div>
<div class="code" style="top:379px">        <span class="b">sub_40160C</span>(<span class="s">"Pity! Wrong flag!\n"</span>);</div>
<div class="ln" style="top:394px">19</div>
<div class="dot" style="top:397px"></div>
<div class="code" style="top:394px">        return 0;</div>
<div class="ln" style="top:409px">20</div>
<div class="code" style="top:409px">      }</div>
<div class="ln" style="top:424px">21</div>
<div class="code" style="top:424px">    }</div>
<div class="ln" style="top:439px">22</div>
<div class="dot" style="top:442px"></div>
<div class="code" style="top:439px">    <span class="b">sub_40160C</span>(<span class="s">"Congratulations! You get the flag!\n"</span>);</div>
<div class="ln" style="top:454px">23</div>
<div class="dot" style="top:457px"></div>
<div class="code" style="top:454px">    return 0;</div>
<div class="ln" style="top:469px">24</div>
<div class="code" style="top:469px">  }</div>
<div class="ln" style="top:484px">25</div>
<div class="code" style="top:484px">  else</div>
<div class="ln" style="top:499px">26</div>
<div class="code" style="top:499px">  {</div>
<div class="ln" style="top:514px">27</div>
<div class="dot" style="top:517px"></div>
<div class="code" style="top:514px">    <span class="b">sub_40160C</span>(<span class="s">"WRONG\n"</span>);</div>
<div class="ln" style="top:529px">28</div>
<div class="dot" style="top:532px"></div>
<div class="code" style="top:529px">    return 0;</div>
<div class="ln" style="top:544px">29</div>
<div class="code" style="top:544px">  }</div>
<div class="ln" style="top:559px">30</div>
<div class="dot" style="top:562px"></div>
<div class="code" style="top:559px">}</div>
<div class="dtitle" style="left:0px;top:1138px;width:2561px;height:30px"></div>
<svg class="a" style="left:4px;top:1144px" width="16" height="16" viewBox="0 0 16 16"><rect x="0.5" y="0.5" width="15" height="15" rx="2" fill="#f2f2f2" stroke="#7c7c7c"/><rect x="1" y="1" width="14" height="2.4" fill="#00dcff"/><path d="M1 3.9h14" stroke="#3a90a8"/><rect x="2.5" y="5" width="11" height="9.5" rx="1.5" fill="#c8c8c8"/><rect x="3.5" y="5.5" width="9" height="8.5" fill="#e8e8e8"/><path d="M6 7.5h6M6 9.5h6M6 11.5h6M6 13.5h6" stroke="#202020" stroke-width="1.1"/><path d="M4 7.5h1M4 9.5h1M4 11.5h1M4 13.5h1" stroke="#1080c0" stroke-width="1.1"/></svg>
<div class="ttl" style="left:26px;top:1146px">Output</div>
<svg class="a" style="left:2488px;top:1149px" width="11" height="10" viewBox="0 0 11 10"><rect x="0.5" y="0.5" width="10" height="9" fill="none" stroke="#303030"/><rect x="0" y="0" width="11" height="2.5" fill="#303030"/></svg>
<svg class="a" style="left:2515px;top:1149px" width="9" height="9" viewBox="0 0 9 9"><rect x="0.5" y="3.5" width="5" height="5" fill="none" stroke="#303030"/><path d="M3 3V0.5h5.5v5H6" fill="none" stroke="#303030"/></svg>
<svg class="a" style="left:2541px;top:1149px" width="9" height="9" viewBox="0 0 9 9"><path d="M1 1l7 7M8 1L1 8" stroke="#303030" stroke-width="1.7"/></svg>
<div class="panel" style="left:0;top:1170px;width:2561px;height:202px;background:#fff"></div>
<div class="a" style="left:1px;top:1171px;width:2540px;height:200px;overflow:hidden">
<div class="out" style="left:6px;top:-8px">401BD1: conditional instruction was optimized away because di.i: 0</div>
<div class="out" style="left:6px;top:7px">401860: using guessed type int sub_401860(void);</div>
<div class="out" style="left:6px;top:22px">401A20: using guessed type int sub_401A20(void);</div>
<div class="out" style="left:6px;top:37px">401BF0: using guessed type int sub_401BF0(void);</div>
<div class="out" style="left:6px;top:52px">410000: using guessed type int n10;</div>
<div class="out" style="left:6px;top:67px">415004: using guessed type int dword_415004;</div>
<div class="out" style="left:6px;top:82px">415008: using guessed type int n0x400000;</div>
<div class="out" style="left:6px;top:97px">415010: using guessed type int dword_415010;</div>
<div class="out" style="left:6px;top:112px">415014: using guessed type int dword_415014;</div>
<div class="out" style="left:6px;top:127px">415018: using guessed type int Code;</div>
<div class="out" style="left:6px;top:142px">4150A4: using guessed type int dword_4150A4;</div>
<div class="out" style="left:6px;top:157px">4150A8: using guessed type int n2;</div>
<div class="out" style="left:6px;top:172px">4150C8: using guessed type int dword_4150C8;</div>
<div class="out" style="left:6px;top:187px">4150E0: using guessed type int dword_4150E0;</div>
</div>
<div class="a" style="left:2543px;top:1171px;width:16px;height:200px;background:#f0f0f0"></div>
<div class="a" style="left:2543px;top:1335px;width:16px;height:18px;background:#cdcdcd"></div>
<svg class="a" style="left:2547px;top:1175px" width="9" height="9" viewBox="0 0 9 9"><path d="M1.2 7l3.3-4 3.3 4" stroke="#505050" fill="none" stroke-width="1.8"/></svg>
<svg class="a" style="left:2547px;top:1358px" width="9" height="9" viewBox="0 0 9 9"><path d="M1.2 2l3.3 4 3.3-4" stroke="#505050" fill="none" stroke-width="1.8"/></svg>
<div class="a" style="left:68px;top:1374px;width:2491px;height:21px;background:#fff;border:1px solid #7a7a7a"></div>
<div class="a" style="left:2px;top:1374px;width:62px;height:21px;background:#e1e1e1;border:1px solid #adadad"></div>
<div class="ttl" style="left:13px;top:1377px">Python</div>
<div class="st2" style="left:2px;top:1400px">AU:  idle</div>
<div class="a" style="left:80px;top:1398px;width:1px;height:17px;background:#d8d8d8"></div>
<div class="st2" style="left:85px;top:1400px">Down</div>
<div class="a" style="left:156px;top:1398px;width:1px;height:17px;background:#d8d8d8"></div>
<div class="st2" style="left:161px;top:1400px">Disk: 585GB</div>
<div class="a" style="left:239px;top:1398px;width:1px;height:17px;background:#d8d8d8"></div>
<div class="a" style="left:0;top:1414px;width:48px;height:1px;background:#202020"></div>
<div class="a" style="left:336px;top:1414px;width:2223px;height:1px;background:#202020"></div>
</body></html>
